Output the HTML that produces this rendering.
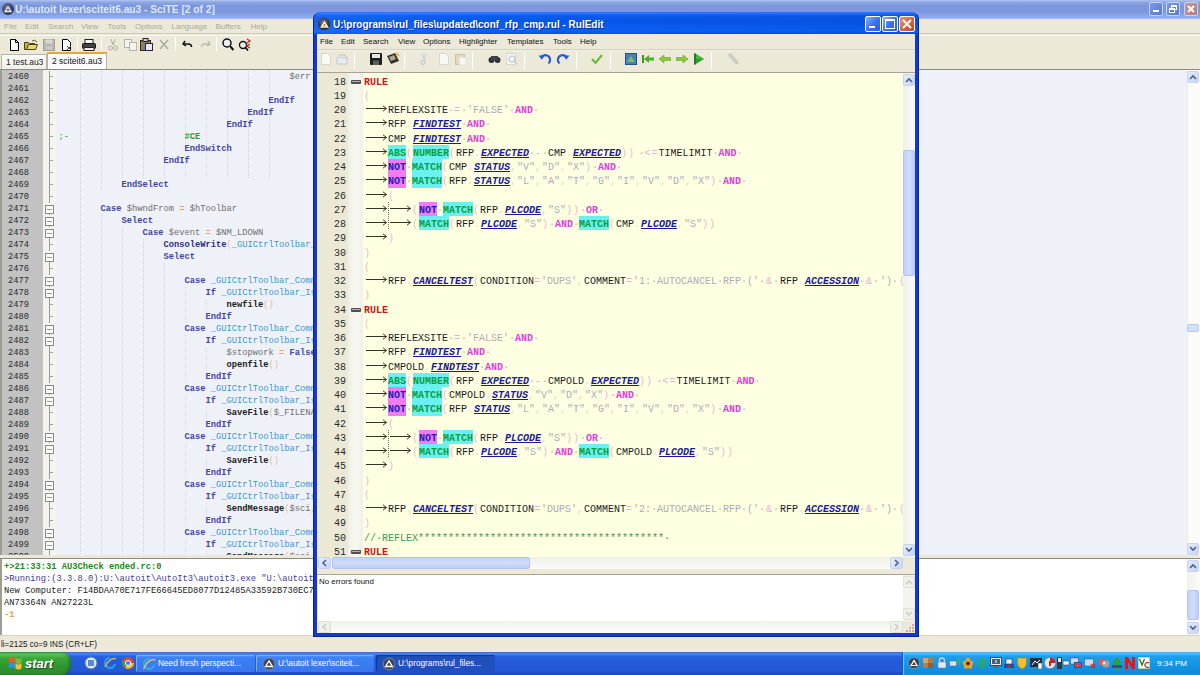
<!DOCTYPE html><html><head><meta charset="utf-8"><style>
*{margin:0;padding:0;box-sizing:border-box}
html,body{width:1200px;height:675px;overflow:hidden;background:#ece9d8;position:relative;font-family:"Liberation Sans",sans-serif}
.a{position:absolute}
.mono{font-family:"Liberation Mono",monospace;white-space:pre}
</style></head><body><div class="a" style="left:0;top:0;width:1200px;height:19px;background:linear-gradient(#b4c6f2 0px,#8ea8e6 2px,#7b95dc 6px,#7d98e0 12px,#8fabec 17px,#a8bdf0 19px)"></div><div class="a" style="left:2px;top:3px;width:12px;height:12px;border-radius:50%;background:radial-gradient(circle at 40% 35%,#6a7a9a,#2a3450 70%)"></div><svg class="a" style="left:3px;top:4px" width="10" height="10"><path d="M2 7.5 L5 3 L8 7.5 Z" fill="none" stroke="#e8ecf4" stroke-width="1.3"/></svg><div class="a" style="left:15px;top:2px;height:16px;line-height:16px;font-size:10.2px;font-weight:bold;color:#dfe8fb;white-space:nowrap;letter-spacing:0px">U:\autoit lexer\sciteit6.au3 - SciTE [2 of 2]</div><div class="a" style="left:1149px;top:2px;width:14px;height:14px;border:1px solid #c8d4f4;border-radius:2px;background:linear-gradient(135deg,#7d9ae4,#5878d8)"></div><div class="a" style="left:1153px;top:10px;width:6px;height:2px;background:#ffffff"></div><div class="a" style="left:1166px;top:2px;width:14px;height:14px;border:1px solid #c8d4f4;border-radius:2px;background:linear-gradient(135deg,#7d9ae4,#5878d8)"></div><div class="a" style="left:1171px;top:5px;width:6px;height:5px;border:1px solid #ffffff;border-top-width:2px"></div><div class="a" style="left:1169px;top:8px;width:6px;height:5px;border:1px solid #ffffff;border-top-width:2px;background:#5878d8"></div><div class="a" style="left:1184px;top:2px;width:14px;height:14px;border:1px solid #c8d4f4;border-radius:2px;background:linear-gradient(135deg,#c69a9a,#b57878)"></div><svg class="a" style="left:1184px;top:2px" width="14" height="14"><path d="M4 4 L10 10 M10 4 L4 10" stroke="#fff" stroke-width="1.8"/></svg><div class="a" style="left:0;top:19px;width:1200px;height:15px;background:#ece9d8;border-bottom:1px solid #cfcbbb"></div><div class="a" style="left:4px;top:20px;font-size:8px;line-height:13px;color:#aca899">File</div><div class="a" style="left:25px;top:20px;font-size:8px;line-height:13px;color:#aca899">Edit</div><div class="a" style="left:48px;top:20px;font-size:8px;line-height:13px;color:#aca899">Search</div><div class="a" style="left:81px;top:20px;font-size:8px;line-height:13px;color:#aca899">View</div><div class="a" style="left:107.5px;top:20px;font-size:8px;line-height:13px;color:#aca899">Tools</div><div class="a" style="left:135px;top:20px;font-size:8px;line-height:13px;color:#aca899">Options</div><div class="a" style="left:171.5px;top:20px;font-size:8px;line-height:13px;color:#aca899">Language</div><div class="a" style="left:215.5px;top:20px;font-size:8px;line-height:13px;color:#aca899">Buffers</div><div class="a" style="left:250.5px;top:20px;font-size:8px;line-height:13px;color:#aca899">Help</div><div class="a" style="left:0;top:35px;width:1200px;height:17px;background:#ece9d8;border-top:1px solid #f8f8f4"></div><svg class="a" style="left:9px;top:39px" width="11" height="12" viewBox="0 0 11 12"><path d="M1.5 0.5h5l3 3v8h-8z" fill="#fff" stroke="#000" stroke-width="1"/><path d="M6.5 0.5v3h3" fill="none" stroke="#000"/></svg><svg class="a" style="left:24px;top:39px" width="14" height="11" viewBox="0 0 14 11"><path d="M0.5 3.5h4l1 1h5v6h-10z" fill="#c8b040" stroke="#4a4010"/><path d="M2.5 10.5l2-5h9l-2 5z" fill="#e8d870" stroke="#4a4010"/><path d="M8 2 q3-2 5 1" stroke="#6a6020" fill="none"/></svg><svg class="a" style="left:43px;top:39px" width="12" height="12" viewBox="0 0 12 12"><rect x="0.5" y="0.5" width="11" height="11" fill="#b8b8b0" stroke="#a0a098"/><rect x="2.5" y="0.5" width="7" height="4" fill="#d8d8d0"/><rect x="3" y="7" width="6" height="4" fill="#c8c8c0"/></svg><svg class="a" style="left:61px;top:39px" width="12" height="12" viewBox="0 0 12 12"><path d="M1.5 0.5h5l3 3v8h-8z" fill="#fff" stroke="#000"/><path d="M6 7l4 4M10 7l-4 4" stroke="#444" stroke-width="1"/></svg><div class="a" style="left:77px;top:37px;width:1px;height:14px;background:#c8c4b4;border-right:1px solid #fff"></div><svg class="a" style="left:82px;top:39px" width="14" height="12" viewBox="0 0 14 12"><rect x="3" y="0.5" width="8" height="4" fill="#fff" stroke="#222"/><rect x="0.5" y="4.5" width="13" height="5" rx="1" fill="#444" stroke="#111"/><rect x="2" y="8.5" width="10" height="3" fill="#eee" stroke="#222"/></svg><div class="a" style="left:101px;top:37px;width:1px;height:14px;background:#c8c4b4;border-right:1px solid #fff"></div><svg class="a" style="left:108px;top:39px" width="10" height="12" viewBox="0 0 10 12"><path d="M3 0l2 6M7 0l-2 6" stroke="#b0b0a8" stroke-width="1"/><circle cx="2.5" cy="9" r="2" fill="none" stroke="#b0b0a8"/><circle cx="7.5" cy="9" r="2" fill="none" stroke="#b0b0a8"/></svg><svg class="a" style="left:124px;top:39px" width="13" height="12" viewBox="0 0 13 12"><rect x="0.5" y="0.5" width="7" height="8" fill="#f4f2ec" stroke="#b8b4a8"/><rect x="5.5" y="3.5" width="7" height="8" fill="#f4f2ec" stroke="#b8b4a8"/></svg><svg class="a" style="left:140px;top:38px" width="13" height="13" viewBox="0 0 13 13"><rect x="0.5" y="2.5" width="10" height="10" fill="#888068" stroke="#302810"/><rect x="3" y="0.5" width="5" height="3" fill="#ccc" stroke="#222"/><rect x="5.5" y="5.5" width="7" height="7" fill="#e8e8f8" stroke="#202060"/></svg><svg class="a" style="left:159px;top:39px" width="10" height="11" viewBox="0 0 10 11"><path d="M1 1l8 9M9 1l-8 9" stroke="#a8a8a0" stroke-width="1.3"/></svg><div class="a" style="left:175px;top:37px;width:1px;height:14px;background:#c8c4b4;border-right:1px solid #fff"></div><svg class="a" style="left:182px;top:40px" width="11" height="9" viewBox="0 0 11 9"><path d="M3 1l-2 3 3 2" fill="none" stroke="#101010" stroke-width="1.5"/><path d="M1.5 4h5q3 0 3 3" fill="none" stroke="#101010" stroke-width="1.5"/></svg><svg class="a" style="left:200px;top:40px" width="11" height="9" viewBox="0 0 11 9"><path d="M8 1l2 3-3 2" fill="none" stroke="#b8b8b0" stroke-width="1.3"/><path d="M9.5 4h-5q-3 0-3 3" fill="none" stroke="#b8b8b0" stroke-width="1.3"/></svg><div class="a" style="left:216px;top:37px;width:1px;height:14px;background:#c8c4b4;border-right:1px solid #fff"></div><svg class="a" style="left:222px;top:38px" width="12" height="13" viewBox="0 0 12 13"><circle cx="5" cy="5" r="4" fill="#e8f0f8" stroke="#101010" stroke-width="1.5"/><path d="M8 8l3.5 4" stroke="#101010" stroke-width="2"/></svg><svg class="a" style="left:238px;top:38px" width="14" height="13" viewBox="0 0 14 13"><circle cx="5" cy="7" r="3.5" fill="#f0f0f0" stroke="#101010" stroke-width="1.4"/><path d="M7.5 9.5l2.5 3" stroke="#101010" stroke-width="1.8"/><path d="M9 1l3 2-3 2M12 6l-3 2 3 2" fill="none" stroke="#c02020" stroke-width="1.2"/></svg><div class="a" style="left:0;top:52px;width:1200px;height:18px;background:#ece9d8"></div><div class="a" style="left:1px;top:54px;width:46px;height:15px;background:linear-gradient(#fdfdfb,#f0efe8);border:1px solid #b8b4a4;border-bottom:none;font-size:8.5px;line-height:14px;color:#222;padding-left:4px;white-space:nowrap">1 test.au3</div><div class="a" style="left:47px;top:52px;width:60px;height:17px;background:#fcfcfe;border:1px solid #b8b4a4;border-bottom:none;border-top:2px solid #e8a838;font-size:8.5px;line-height:14px;color:#111;padding-left:4px;white-space:nowrap">2 sciteit6.au3</div><div class="a" style="left:0;top:69px;width:1200px;height:1px;background:#8c8a80"></div><div class="a" style="left:0;top:70px;width:1200px;height:485px;background:#eef2f8"></div><div class="a" style="left:0;top:70px;width:2px;height:485px;background:#a09c90"></div><div class="a" style="left:2px;top:70px;width:41px;height:485px;background:#c2c2c2"></div><div class="a" style="left:43px;top:70px;width:13px;height:485px;background:#f5f3ee"></div><div class="a" style="left:1187px;top:70px;width:13px;height:485px;background:#fbfbf8;border-left:1px solid #eeede5"></div><div class="a" style="left:1187px;top:71px;width:12px;height:12px;border:1px solid #c6d4f6;border-radius:2px;background:linear-gradient(135deg,#e4ecfc,#c4d4f6)"></div><svg class="a" style="left:1188px;top:73px" width="10" height="8" viewBox="0 0 10 8"><path d="M2 6l3-3 3 3" fill="none" stroke="#4d6185" stroke-width="1.6"/></svg><div class="a" style="left:1187px;top:543px;width:12px;height:12px;border:1px solid #c6d4f6;border-radius:2px;background:linear-gradient(135deg,#e4ecfc,#c4d4f6)"></div><svg class="a" style="left:1188px;top:545px" width="10" height="8" viewBox="0 0 10 8"><path d="M2 2l3 3 3-3" fill="none" stroke="#4d6185" stroke-width="1.6"/></svg><div class="a" style="left:1187px;top:324px;width:12px;height:8px;border:1px solid #b8c8f0;border-radius:2px;background:#d4e0fa"></div><div class="a" style="left:0;top:0;width:1187px;height:555px;overflow:hidden"><div class="a" style="left:79.5px;top:71.0px;width:1px;height:12px;background:repeating-linear-gradient(#d0d4dc 0 1px,transparent 1px 2px)"></div><div class="a" style="left:100.5px;top:71.0px;width:1px;height:12px;background:repeating-linear-gradient(#d0d4dc 0 1px,transparent 1px 2px)"></div><div class="a" style="left:121.5px;top:71.0px;width:1px;height:12px;background:repeating-linear-gradient(#d0d4dc 0 1px,transparent 1px 2px)"></div><div class="a" style="left:142.5px;top:71.0px;width:1px;height:12px;background:repeating-linear-gradient(#d0d4dc 0 1px,transparent 1px 2px)"></div><div class="a" style="left:163.5px;top:71.0px;width:1px;height:12px;background:repeating-linear-gradient(#d0d4dc 0 1px,transparent 1px 2px)"></div><div class="a" style="left:184.5px;top:71.0px;width:1px;height:12px;background:repeating-linear-gradient(#d0d4dc 0 1px,transparent 1px 2px)"></div><div class="a" style="left:205.5px;top:71.0px;width:1px;height:12px;background:repeating-linear-gradient(#d0d4dc 0 1px,transparent 1px 2px)"></div><div class="a" style="left:226.5px;top:71.0px;width:1px;height:12px;background:repeating-linear-gradient(#d0d4dc 0 1px,transparent 1px 2px)"></div><div class="a" style="left:247.5px;top:71.0px;width:1px;height:12px;background:repeating-linear-gradient(#d0d4dc 0 1px,transparent 1px 2px)"></div><div class="a" style="left:268.5px;top:71.0px;width:1px;height:12px;background:repeating-linear-gradient(#d0d4dc 0 1px,transparent 1px 2px)"></div><div class="a mono" style="left:2px;top:71.0px;width:27px;text-align:right;font-size:8.75px;line-height:12px;color:#2a2a2a">2460</div><div class="a" style="left:49px;top:71.0px;width:1px;height:12px;background:#9a9a9a"></div><div class="a" style="left:49px;top:76.0px;width:4px;height:1px;background:#a0a0a0"></div><div class="a mono" style="left:289.50px;top:71.0px;font-size:8.75px;line-height:12px"><span style="color:#6e6e6e">$err</span></div><div class="a" style="left:79.5px;top:83.0px;width:1px;height:12px;background:repeating-linear-gradient(#d0d4dc 0 1px,transparent 1px 2px)"></div><div class="a" style="left:100.5px;top:83.0px;width:1px;height:12px;background:repeating-linear-gradient(#d0d4dc 0 1px,transparent 1px 2px)"></div><div class="a" style="left:121.5px;top:83.0px;width:1px;height:12px;background:repeating-linear-gradient(#d0d4dc 0 1px,transparent 1px 2px)"></div><div class="a" style="left:142.5px;top:83.0px;width:1px;height:12px;background:repeating-linear-gradient(#d0d4dc 0 1px,transparent 1px 2px)"></div><div class="a" style="left:163.5px;top:83.0px;width:1px;height:12px;background:repeating-linear-gradient(#d0d4dc 0 1px,transparent 1px 2px)"></div><div class="a" style="left:184.5px;top:83.0px;width:1px;height:12px;background:repeating-linear-gradient(#d0d4dc 0 1px,transparent 1px 2px)"></div><div class="a" style="left:205.5px;top:83.0px;width:1px;height:12px;background:repeating-linear-gradient(#d0d4dc 0 1px,transparent 1px 2px)"></div><div class="a" style="left:226.5px;top:83.0px;width:1px;height:12px;background:repeating-linear-gradient(#d0d4dc 0 1px,transparent 1px 2px)"></div><div class="a" style="left:247.5px;top:83.0px;width:1px;height:12px;background:repeating-linear-gradient(#d0d4dc 0 1px,transparent 1px 2px)"></div><div class="a" style="left:268.5px;top:83.0px;width:1px;height:12px;background:repeating-linear-gradient(#d0d4dc 0 1px,transparent 1px 2px)"></div><div class="a mono" style="left:2px;top:83.0px;width:27px;text-align:right;font-size:8.75px;line-height:12px;color:#2a2a2a">2461</div><div class="a" style="left:49px;top:83.0px;width:1px;height:12px;background:#9a9a9a"></div><div class="a" style="left:49px;top:88.0px;width:4px;height:1px;background:#a0a0a0"></div><div class="a mono" style="left:58.50px;top:83.0px;font-size:8.75px;line-height:12px"></div><div class="a" style="left:79.5px;top:95.0px;width:1px;height:12px;background:repeating-linear-gradient(#d0d4dc 0 1px,transparent 1px 2px)"></div><div class="a" style="left:100.5px;top:95.0px;width:1px;height:12px;background:repeating-linear-gradient(#d0d4dc 0 1px,transparent 1px 2px)"></div><div class="a" style="left:121.5px;top:95.0px;width:1px;height:12px;background:repeating-linear-gradient(#d0d4dc 0 1px,transparent 1px 2px)"></div><div class="a" style="left:142.5px;top:95.0px;width:1px;height:12px;background:repeating-linear-gradient(#d0d4dc 0 1px,transparent 1px 2px)"></div><div class="a" style="left:163.5px;top:95.0px;width:1px;height:12px;background:repeating-linear-gradient(#d0d4dc 0 1px,transparent 1px 2px)"></div><div class="a" style="left:184.5px;top:95.0px;width:1px;height:12px;background:repeating-linear-gradient(#d0d4dc 0 1px,transparent 1px 2px)"></div><div class="a" style="left:205.5px;top:95.0px;width:1px;height:12px;background:repeating-linear-gradient(#d0d4dc 0 1px,transparent 1px 2px)"></div><div class="a" style="left:226.5px;top:95.0px;width:1px;height:12px;background:repeating-linear-gradient(#d0d4dc 0 1px,transparent 1px 2px)"></div><div class="a" style="left:247.5px;top:95.0px;width:1px;height:12px;background:repeating-linear-gradient(#d0d4dc 0 1px,transparent 1px 2px)"></div><div class="a" style="left:268.5px;top:95.0px;width:1px;height:12px;background:repeating-linear-gradient(#d0d4dc 0 1px,transparent 1px 2px)"></div><div class="a mono" style="left:2px;top:95.0px;width:27px;text-align:right;font-size:8.75px;line-height:12px;color:#2a2a2a">2462</div><div class="a" style="left:49px;top:95.0px;width:1px;height:12px;background:#9a9a9a"></div><div class="a" style="left:49px;top:100.0px;width:4px;height:1px;background:#a0a0a0"></div><div class="a mono" style="left:268.50px;top:95.0px;font-size:8.75px;line-height:12px"><span style="color:#4444a8;font-weight:bold">EndIf</span></div><div class="a" style="left:79.5px;top:107.0px;width:1px;height:12px;background:repeating-linear-gradient(#d0d4dc 0 1px,transparent 1px 2px)"></div><div class="a" style="left:100.5px;top:107.0px;width:1px;height:12px;background:repeating-linear-gradient(#d0d4dc 0 1px,transparent 1px 2px)"></div><div class="a" style="left:121.5px;top:107.0px;width:1px;height:12px;background:repeating-linear-gradient(#d0d4dc 0 1px,transparent 1px 2px)"></div><div class="a" style="left:142.5px;top:107.0px;width:1px;height:12px;background:repeating-linear-gradient(#d0d4dc 0 1px,transparent 1px 2px)"></div><div class="a" style="left:163.5px;top:107.0px;width:1px;height:12px;background:repeating-linear-gradient(#d0d4dc 0 1px,transparent 1px 2px)"></div><div class="a" style="left:184.5px;top:107.0px;width:1px;height:12px;background:repeating-linear-gradient(#d0d4dc 0 1px,transparent 1px 2px)"></div><div class="a" style="left:205.5px;top:107.0px;width:1px;height:12px;background:repeating-linear-gradient(#d0d4dc 0 1px,transparent 1px 2px)"></div><div class="a" style="left:226.5px;top:107.0px;width:1px;height:12px;background:repeating-linear-gradient(#d0d4dc 0 1px,transparent 1px 2px)"></div><div class="a" style="left:247.5px;top:107.0px;width:1px;height:12px;background:repeating-linear-gradient(#d0d4dc 0 1px,transparent 1px 2px)"></div><div class="a" style="left:268.5px;top:107.0px;width:1px;height:12px;background:repeating-linear-gradient(#d0d4dc 0 1px,transparent 1px 2px)"></div><div class="a mono" style="left:2px;top:107.0px;width:27px;text-align:right;font-size:8.75px;line-height:12px;color:#2a2a2a">2463</div><div class="a" style="left:49px;top:107.0px;width:1px;height:12px;background:#9a9a9a"></div><div class="a" style="left:49px;top:112.0px;width:4px;height:1px;background:#a0a0a0"></div><div class="a mono" style="left:247.50px;top:107.0px;font-size:8.75px;line-height:12px"><span style="color:#4444a8;font-weight:bold">EndIf</span></div><div class="a" style="left:79.5px;top:119.0px;width:1px;height:12px;background:repeating-linear-gradient(#d0d4dc 0 1px,transparent 1px 2px)"></div><div class="a" style="left:100.5px;top:119.0px;width:1px;height:12px;background:repeating-linear-gradient(#d0d4dc 0 1px,transparent 1px 2px)"></div><div class="a" style="left:121.5px;top:119.0px;width:1px;height:12px;background:repeating-linear-gradient(#d0d4dc 0 1px,transparent 1px 2px)"></div><div class="a" style="left:142.5px;top:119.0px;width:1px;height:12px;background:repeating-linear-gradient(#d0d4dc 0 1px,transparent 1px 2px)"></div><div class="a" style="left:163.5px;top:119.0px;width:1px;height:12px;background:repeating-linear-gradient(#d0d4dc 0 1px,transparent 1px 2px)"></div><div class="a" style="left:184.5px;top:119.0px;width:1px;height:12px;background:repeating-linear-gradient(#d0d4dc 0 1px,transparent 1px 2px)"></div><div class="a" style="left:205.5px;top:119.0px;width:1px;height:12px;background:repeating-linear-gradient(#d0d4dc 0 1px,transparent 1px 2px)"></div><div class="a" style="left:226.5px;top:119.0px;width:1px;height:12px;background:repeating-linear-gradient(#d0d4dc 0 1px,transparent 1px 2px)"></div><div class="a" style="left:247.5px;top:119.0px;width:1px;height:12px;background:repeating-linear-gradient(#d0d4dc 0 1px,transparent 1px 2px)"></div><div class="a" style="left:268.5px;top:119.0px;width:1px;height:12px;background:repeating-linear-gradient(#d0d4dc 0 1px,transparent 1px 2px)"></div><div class="a mono" style="left:2px;top:119.0px;width:27px;text-align:right;font-size:8.75px;line-height:12px;color:#2a2a2a">2464</div><div class="a" style="left:49px;top:119.0px;width:1px;height:12px;background:#9a9a9a"></div><div class="a" style="left:49px;top:124.0px;width:4px;height:1px;background:#a0a0a0"></div><div class="a mono" style="left:226.50px;top:119.0px;font-size:8.75px;line-height:12px"><span style="color:#4444a8;font-weight:bold">EndIf</span></div><div class="a" style="left:79.5px;top:131.0px;width:1px;height:12px;background:repeating-linear-gradient(#d0d4dc 0 1px,transparent 1px 2px)"></div><div class="a" style="left:100.5px;top:131.0px;width:1px;height:12px;background:repeating-linear-gradient(#d0d4dc 0 1px,transparent 1px 2px)"></div><div class="a" style="left:121.5px;top:131.0px;width:1px;height:12px;background:repeating-linear-gradient(#d0d4dc 0 1px,transparent 1px 2px)"></div><div class="a" style="left:142.5px;top:131.0px;width:1px;height:12px;background:repeating-linear-gradient(#d0d4dc 0 1px,transparent 1px 2px)"></div><div class="a" style="left:163.5px;top:131.0px;width:1px;height:12px;background:repeating-linear-gradient(#d0d4dc 0 1px,transparent 1px 2px)"></div><div class="a" style="left:184.5px;top:131.0px;width:1px;height:12px;background:repeating-linear-gradient(#d0d4dc 0 1px,transparent 1px 2px)"></div><div class="a" style="left:205.5px;top:131.0px;width:1px;height:12px;background:repeating-linear-gradient(#d0d4dc 0 1px,transparent 1px 2px)"></div><div class="a" style="left:226.5px;top:131.0px;width:1px;height:12px;background:repeating-linear-gradient(#d0d4dc 0 1px,transparent 1px 2px)"></div><div class="a" style="left:247.5px;top:131.0px;width:1px;height:12px;background:repeating-linear-gradient(#d0d4dc 0 1px,transparent 1px 2px)"></div><div class="a" style="left:268.5px;top:131.0px;width:1px;height:12px;background:repeating-linear-gradient(#d0d4dc 0 1px,transparent 1px 2px)"></div><div class="a mono" style="left:2px;top:131.0px;width:27px;text-align:right;font-size:8.75px;line-height:12px;color:#2a2a2a">2465</div><div class="a" style="left:49px;top:131.0px;width:1px;height:12px;background:#9a9a9a"></div><div class="a" style="left:49px;top:136.0px;width:4px;height:1px;background:#a0a0a0"></div><div class="a mono" style="left:58.50px;top:131.0px;font-size:8.75px;line-height:12px"><span style="color:#2a9a2a">;-</span><span style="color:#222">                      </span><span style="color:#2a9a2a;font-weight:bold">#CE</span></div><div class="a" style="left:79.5px;top:143.0px;width:1px;height:12px;background:repeating-linear-gradient(#d0d4dc 0 1px,transparent 1px 2px)"></div><div class="a" style="left:100.5px;top:143.0px;width:1px;height:12px;background:repeating-linear-gradient(#d0d4dc 0 1px,transparent 1px 2px)"></div><div class="a" style="left:121.5px;top:143.0px;width:1px;height:12px;background:repeating-linear-gradient(#d0d4dc 0 1px,transparent 1px 2px)"></div><div class="a" style="left:142.5px;top:143.0px;width:1px;height:12px;background:repeating-linear-gradient(#d0d4dc 0 1px,transparent 1px 2px)"></div><div class="a" style="left:163.5px;top:143.0px;width:1px;height:12px;background:repeating-linear-gradient(#d0d4dc 0 1px,transparent 1px 2px)"></div><div class="a" style="left:184.5px;top:143.0px;width:1px;height:12px;background:repeating-linear-gradient(#d0d4dc 0 1px,transparent 1px 2px)"></div><div class="a" style="left:205.5px;top:143.0px;width:1px;height:12px;background:repeating-linear-gradient(#d0d4dc 0 1px,transparent 1px 2px)"></div><div class="a" style="left:226.5px;top:143.0px;width:1px;height:12px;background:repeating-linear-gradient(#d0d4dc 0 1px,transparent 1px 2px)"></div><div class="a" style="left:247.5px;top:143.0px;width:1px;height:12px;background:repeating-linear-gradient(#d0d4dc 0 1px,transparent 1px 2px)"></div><div class="a" style="left:268.5px;top:143.0px;width:1px;height:12px;background:repeating-linear-gradient(#d0d4dc 0 1px,transparent 1px 2px)"></div><div class="a mono" style="left:2px;top:143.0px;width:27px;text-align:right;font-size:8.75px;line-height:12px;color:#2a2a2a">2466</div><div class="a" style="left:49px;top:143.0px;width:1px;height:12px;background:#9a9a9a"></div><div class="a" style="left:49px;top:148.0px;width:4px;height:1px;background:#a0a0a0"></div><div class="a mono" style="left:184.50px;top:143.0px;font-size:8.75px;line-height:12px"><span style="color:#4444a8;font-weight:bold">EndSwitch</span></div><div class="a" style="left:79.5px;top:155.0px;width:1px;height:12px;background:repeating-linear-gradient(#d0d4dc 0 1px,transparent 1px 2px)"></div><div class="a" style="left:100.5px;top:155.0px;width:1px;height:12px;background:repeating-linear-gradient(#d0d4dc 0 1px,transparent 1px 2px)"></div><div class="a" style="left:121.5px;top:155.0px;width:1px;height:12px;background:repeating-linear-gradient(#d0d4dc 0 1px,transparent 1px 2px)"></div><div class="a" style="left:142.5px;top:155.0px;width:1px;height:12px;background:repeating-linear-gradient(#d0d4dc 0 1px,transparent 1px 2px)"></div><div class="a" style="left:163.5px;top:155.0px;width:1px;height:12px;background:repeating-linear-gradient(#d0d4dc 0 1px,transparent 1px 2px)"></div><div class="a" style="left:184.5px;top:155.0px;width:1px;height:12px;background:repeating-linear-gradient(#d0d4dc 0 1px,transparent 1px 2px)"></div><div class="a" style="left:205.5px;top:155.0px;width:1px;height:12px;background:repeating-linear-gradient(#d0d4dc 0 1px,transparent 1px 2px)"></div><div class="a" style="left:226.5px;top:155.0px;width:1px;height:12px;background:repeating-linear-gradient(#d0d4dc 0 1px,transparent 1px 2px)"></div><div class="a" style="left:247.5px;top:155.0px;width:1px;height:12px;background:repeating-linear-gradient(#d0d4dc 0 1px,transparent 1px 2px)"></div><div class="a" style="left:268.5px;top:155.0px;width:1px;height:12px;background:repeating-linear-gradient(#d0d4dc 0 1px,transparent 1px 2px)"></div><div class="a mono" style="left:2px;top:155.0px;width:27px;text-align:right;font-size:8.75px;line-height:12px;color:#2a2a2a">2467</div><div class="a" style="left:49px;top:155.0px;width:1px;height:12px;background:#9a9a9a"></div><div class="a" style="left:49px;top:160.0px;width:4px;height:1px;background:#a0a0a0"></div><div class="a mono" style="left:163.50px;top:155.0px;font-size:8.75px;line-height:12px"><span style="color:#4444a8;font-weight:bold">EndIf</span></div><div class="a" style="left:79.5px;top:167.0px;width:1px;height:12px;background:repeating-linear-gradient(#d0d4dc 0 1px,transparent 1px 2px)"></div><div class="a" style="left:100.5px;top:167.0px;width:1px;height:12px;background:repeating-linear-gradient(#d0d4dc 0 1px,transparent 1px 2px)"></div><div class="a" style="left:121.5px;top:167.0px;width:1px;height:12px;background:repeating-linear-gradient(#d0d4dc 0 1px,transparent 1px 2px)"></div><div class="a" style="left:142.5px;top:167.0px;width:1px;height:12px;background:repeating-linear-gradient(#d0d4dc 0 1px,transparent 1px 2px)"></div><div class="a" style="left:163.5px;top:167.0px;width:1px;height:12px;background:repeating-linear-gradient(#d0d4dc 0 1px,transparent 1px 2px)"></div><div class="a" style="left:184.5px;top:167.0px;width:1px;height:12px;background:repeating-linear-gradient(#d0d4dc 0 1px,transparent 1px 2px)"></div><div class="a" style="left:205.5px;top:167.0px;width:1px;height:12px;background:repeating-linear-gradient(#d0d4dc 0 1px,transparent 1px 2px)"></div><div class="a" style="left:226.5px;top:167.0px;width:1px;height:12px;background:repeating-linear-gradient(#d0d4dc 0 1px,transparent 1px 2px)"></div><div class="a" style="left:247.5px;top:167.0px;width:1px;height:12px;background:repeating-linear-gradient(#d0d4dc 0 1px,transparent 1px 2px)"></div><div class="a" style="left:268.5px;top:167.0px;width:1px;height:12px;background:repeating-linear-gradient(#d0d4dc 0 1px,transparent 1px 2px)"></div><div class="a mono" style="left:2px;top:167.0px;width:27px;text-align:right;font-size:8.75px;line-height:12px;color:#2a2a2a">2468</div><div class="a" style="left:49px;top:167.0px;width:1px;height:12px;background:#9a9a9a"></div><div class="a" style="left:49px;top:172.0px;width:4px;height:1px;background:#a0a0a0"></div><div class="a mono" style="left:58.50px;top:167.0px;font-size:8.75px;line-height:12px"></div><div class="a" style="left:79.5px;top:179.0px;width:1px;height:12px;background:repeating-linear-gradient(#d0d4dc 0 1px,transparent 1px 2px)"></div><div class="a" style="left:100.5px;top:179.0px;width:1px;height:12px;background:repeating-linear-gradient(#d0d4dc 0 1px,transparent 1px 2px)"></div><div class="a mono" style="left:2px;top:179.0px;width:27px;text-align:right;font-size:8.75px;line-height:12px;color:#2a2a2a">2469</div><div class="a" style="left:49px;top:179.0px;width:1px;height:12px;background:#9a9a9a"></div><div class="a" style="left:49px;top:184.0px;width:4px;height:1px;background:#a0a0a0"></div><div class="a mono" style="left:121.50px;top:179.0px;font-size:8.75px;line-height:12px"><span style="color:#4444a8;font-weight:bold">EndSelect</span></div><div class="a" style="left:79.5px;top:191.0px;width:1px;height:12px;background:repeating-linear-gradient(#d0d4dc 0 1px,transparent 1px 2px)"></div><div class="a mono" style="left:2px;top:191.0px;width:27px;text-align:right;font-size:8.75px;line-height:12px;color:#2a2a2a">2470</div><div class="a" style="left:49px;top:191.0px;width:1px;height:12px;background:#9a9a9a"></div><div class="a" style="left:49px;top:196.0px;width:4px;height:1px;background:#a0a0a0"></div><div class="a mono" style="left:58.50px;top:191.0px;font-size:8.75px;line-height:12px"></div><div class="a" style="left:79.5px;top:203.0px;width:1px;height:12px;background:repeating-linear-gradient(#d0d4dc 0 1px,transparent 1px 2px)"></div><div class="a mono" style="left:2px;top:203.0px;width:27px;text-align:right;font-size:8.75px;line-height:12px;color:#2a2a2a">2471</div><div class="a" style="left:45px;top:205.0px;width:8.5px;height:8.5px;border:1px solid #8a8a8a;background:#fff"></div><div class="a" style="left:47px;top:208.8px;width:4.5px;height:1px;background:#999"></div><div class="a" style="left:49px;top:213.5px;width:1px;height:1.5px;background:#909090"></div><div class="a mono" style="left:100.50px;top:203.0px;font-size:8.75px;line-height:12px"><span style="color:#4444a8;font-weight:bold">Case</span><span style="color:#222"> </span><span style="color:#6e6e6e">$hwndFrom</span><span style="color:#222"> </span><span style="color:#e6a45a;font-weight:bold">=</span><span style="color:#222"> </span><span style="color:#6e6e6e">$hToolbar</span></div><div class="a" style="left:79.5px;top:215.0px;width:1px;height:12px;background:repeating-linear-gradient(#d0d4dc 0 1px,transparent 1px 2px)"></div><div class="a" style="left:100.5px;top:215.0px;width:1px;height:12px;background:repeating-linear-gradient(#d0d4dc 0 1px,transparent 1px 2px)"></div><div class="a mono" style="left:2px;top:215.0px;width:27px;text-align:right;font-size:8.75px;line-height:12px;color:#2a2a2a">2472</div><div class="a" style="left:45px;top:217.0px;width:8.5px;height:8.5px;border:1px solid #8a8a8a;background:#fff"></div><div class="a" style="left:47px;top:220.8px;width:4.5px;height:1px;background:#999"></div><div class="a" style="left:49px;top:225.5px;width:1px;height:1.5px;background:#909090"></div><div class="a mono" style="left:121.50px;top:215.0px;font-size:8.75px;line-height:12px"><span style="color:#4444a8;font-weight:bold">Select</span></div><div class="a" style="left:79.5px;top:227.0px;width:1px;height:12px;background:repeating-linear-gradient(#d0d4dc 0 1px,transparent 1px 2px)"></div><div class="a" style="left:100.5px;top:227.0px;width:1px;height:12px;background:repeating-linear-gradient(#d0d4dc 0 1px,transparent 1px 2px)"></div><div class="a" style="left:121.5px;top:227.0px;width:1px;height:12px;background:repeating-linear-gradient(#d0d4dc 0 1px,transparent 1px 2px)"></div><div class="a mono" style="left:2px;top:227.0px;width:27px;text-align:right;font-size:8.75px;line-height:12px;color:#2a2a2a">2473</div><div class="a" style="left:45px;top:229.0px;width:8.5px;height:8.5px;border:1px solid #8a8a8a;background:#fff"></div><div class="a" style="left:47px;top:232.8px;width:4.5px;height:1px;background:#999"></div><div class="a" style="left:49px;top:237.5px;width:1px;height:1.5px;background:#909090"></div><div class="a mono" style="left:142.50px;top:227.0px;font-size:8.75px;line-height:12px"><span style="color:#4444a8;font-weight:bold">Case</span><span style="color:#222"> </span><span style="color:#6e6e6e">$event</span><span style="color:#222"> </span><span style="color:#e6a45a;font-weight:bold">=</span><span style="color:#222"> </span><span style="color:#6e6e6e">$NM_LDOWN</span></div><div class="a" style="left:79.5px;top:239.0px;width:1px;height:12px;background:repeating-linear-gradient(#d0d4dc 0 1px,transparent 1px 2px)"></div><div class="a" style="left:100.5px;top:239.0px;width:1px;height:12px;background:repeating-linear-gradient(#d0d4dc 0 1px,transparent 1px 2px)"></div><div class="a" style="left:121.5px;top:239.0px;width:1px;height:12px;background:repeating-linear-gradient(#d0d4dc 0 1px,transparent 1px 2px)"></div><div class="a" style="left:142.5px;top:239.0px;width:1px;height:12px;background:repeating-linear-gradient(#d0d4dc 0 1px,transparent 1px 2px)"></div><div class="a mono" style="left:2px;top:239.0px;width:27px;text-align:right;font-size:8.75px;line-height:12px;color:#2a2a2a">2474</div><div class="a" style="left:49px;top:239.0px;width:1px;height:12px;background:#9a9a9a"></div><div class="a" style="left:49px;top:244.0px;width:4px;height:1px;background:#a0a0a0"></div><div class="a mono" style="left:163.50px;top:239.0px;font-size:8.75px;line-height:12px"><span style="color:#303080;font-weight:bold">ConsoleWrite</span><span style="color:#e6c090">(</span><span style="color:#3a98d0">_GUICtrlToolbar_IndexToCommand</span><span style="color:#e6c090">(</span><span style="color:#6e6e6e">$hToolbar</span></div><div class="a" style="left:79.5px;top:251.0px;width:1px;height:12px;background:repeating-linear-gradient(#d0d4dc 0 1px,transparent 1px 2px)"></div><div class="a" style="left:100.5px;top:251.0px;width:1px;height:12px;background:repeating-linear-gradient(#d0d4dc 0 1px,transparent 1px 2px)"></div><div class="a" style="left:121.5px;top:251.0px;width:1px;height:12px;background:repeating-linear-gradient(#d0d4dc 0 1px,transparent 1px 2px)"></div><div class="a" style="left:142.5px;top:251.0px;width:1px;height:12px;background:repeating-linear-gradient(#d0d4dc 0 1px,transparent 1px 2px)"></div><div class="a mono" style="left:2px;top:251.0px;width:27px;text-align:right;font-size:8.75px;line-height:12px;color:#2a2a2a">2475</div><div class="a" style="left:45px;top:253.0px;width:8.5px;height:8.5px;border:1px solid #8a8a8a;background:#fff"></div><div class="a" style="left:47px;top:256.8px;width:4.5px;height:1px;background:#999"></div><div class="a" style="left:49px;top:261.5px;width:1px;height:1.5px;background:#909090"></div><div class="a mono" style="left:163.50px;top:251.0px;font-size:8.75px;line-height:12px"><span style="color:#4444a8;font-weight:bold">Select</span></div><div class="a" style="left:79.5px;top:263.0px;width:1px;height:12px;background:repeating-linear-gradient(#d0d4dc 0 1px,transparent 1px 2px)"></div><div class="a" style="left:100.5px;top:263.0px;width:1px;height:12px;background:repeating-linear-gradient(#d0d4dc 0 1px,transparent 1px 2px)"></div><div class="a" style="left:121.5px;top:263.0px;width:1px;height:12px;background:repeating-linear-gradient(#d0d4dc 0 1px,transparent 1px 2px)"></div><div class="a" style="left:142.5px;top:263.0px;width:1px;height:12px;background:repeating-linear-gradient(#d0d4dc 0 1px,transparent 1px 2px)"></div><div class="a" style="left:163.5px;top:263.0px;width:1px;height:12px;background:repeating-linear-gradient(#d0d4dc 0 1px,transparent 1px 2px)"></div><div class="a mono" style="left:2px;top:263.0px;width:27px;text-align:right;font-size:8.75px;line-height:12px;color:#2a2a2a">2476</div><div class="a" style="left:49px;top:263.0px;width:1px;height:12px;background:#9a9a9a"></div><div class="a" style="left:49px;top:268.0px;width:4px;height:1px;background:#a0a0a0"></div><div class="a mono" style="left:58.50px;top:263.0px;font-size:8.75px;line-height:12px"></div><div class="a" style="left:79.5px;top:275.0px;width:1px;height:12px;background:repeating-linear-gradient(#d0d4dc 0 1px,transparent 1px 2px)"></div><div class="a" style="left:100.5px;top:275.0px;width:1px;height:12px;background:repeating-linear-gradient(#d0d4dc 0 1px,transparent 1px 2px)"></div><div class="a" style="left:121.5px;top:275.0px;width:1px;height:12px;background:repeating-linear-gradient(#d0d4dc 0 1px,transparent 1px 2px)"></div><div class="a" style="left:142.5px;top:275.0px;width:1px;height:12px;background:repeating-linear-gradient(#d0d4dc 0 1px,transparent 1px 2px)"></div><div class="a" style="left:163.5px;top:275.0px;width:1px;height:12px;background:repeating-linear-gradient(#d0d4dc 0 1px,transparent 1px 2px)"></div><div class="a mono" style="left:2px;top:275.0px;width:27px;text-align:right;font-size:8.75px;line-height:12px;color:#2a2a2a">2477</div><div class="a" style="left:45px;top:277.0px;width:8.5px;height:8.5px;border:1px solid #8a8a8a;background:#fff"></div><div class="a" style="left:47px;top:280.8px;width:4.5px;height:1px;background:#999"></div><div class="a" style="left:49px;top:285.5px;width:1px;height:1.5px;background:#909090"></div><div class="a mono" style="left:184.50px;top:275.0px;font-size:8.75px;line-height:12px"><span style="color:#4444a8;font-weight:bold">Case</span><span style="color:#222"> </span><span style="color:#3a98d0">_GUICtrlToolbar_CommandToIndex</span><span style="color:#e6c090">(</span><span style="color:#6e6e6e">$hToolbar</span></div><div class="a" style="left:79.5px;top:287.0px;width:1px;height:12px;background:repeating-linear-gradient(#d0d4dc 0 1px,transparent 1px 2px)"></div><div class="a" style="left:100.5px;top:287.0px;width:1px;height:12px;background:repeating-linear-gradient(#d0d4dc 0 1px,transparent 1px 2px)"></div><div class="a" style="left:121.5px;top:287.0px;width:1px;height:12px;background:repeating-linear-gradient(#d0d4dc 0 1px,transparent 1px 2px)"></div><div class="a" style="left:142.5px;top:287.0px;width:1px;height:12px;background:repeating-linear-gradient(#d0d4dc 0 1px,transparent 1px 2px)"></div><div class="a" style="left:163.5px;top:287.0px;width:1px;height:12px;background:repeating-linear-gradient(#d0d4dc 0 1px,transparent 1px 2px)"></div><div class="a" style="left:184.5px;top:287.0px;width:1px;height:12px;background:repeating-linear-gradient(#d0d4dc 0 1px,transparent 1px 2px)"></div><div class="a mono" style="left:2px;top:287.0px;width:27px;text-align:right;font-size:8.75px;line-height:12px;color:#2a2a2a">2478</div><div class="a" style="left:45px;top:289.0px;width:8.5px;height:8.5px;border:1px solid #8a8a8a;background:#fff"></div><div class="a" style="left:47px;top:292.8px;width:4.5px;height:1px;background:#999"></div><div class="a" style="left:49px;top:297.5px;width:1px;height:1.5px;background:#909090"></div><div class="a mono" style="left:205.50px;top:287.0px;font-size:8.75px;line-height:12px"><span style="color:#4444a8;font-weight:bold">If</span><span style="color:#222"> </span><span style="color:#3a98d0">_GUICtrlToolbar_IsButtonChecked</span><span style="color:#e6c090">(</span></div><div class="a" style="left:79.5px;top:299.0px;width:1px;height:12px;background:repeating-linear-gradient(#d0d4dc 0 1px,transparent 1px 2px)"></div><div class="a" style="left:100.5px;top:299.0px;width:1px;height:12px;background:repeating-linear-gradient(#d0d4dc 0 1px,transparent 1px 2px)"></div><div class="a" style="left:121.5px;top:299.0px;width:1px;height:12px;background:repeating-linear-gradient(#d0d4dc 0 1px,transparent 1px 2px)"></div><div class="a" style="left:142.5px;top:299.0px;width:1px;height:12px;background:repeating-linear-gradient(#d0d4dc 0 1px,transparent 1px 2px)"></div><div class="a" style="left:163.5px;top:299.0px;width:1px;height:12px;background:repeating-linear-gradient(#d0d4dc 0 1px,transparent 1px 2px)"></div><div class="a" style="left:184.5px;top:299.0px;width:1px;height:12px;background:repeating-linear-gradient(#d0d4dc 0 1px,transparent 1px 2px)"></div><div class="a" style="left:205.5px;top:299.0px;width:1px;height:12px;background:repeating-linear-gradient(#d0d4dc 0 1px,transparent 1px 2px)"></div><div class="a mono" style="left:2px;top:299.0px;width:27px;text-align:right;font-size:8.75px;line-height:12px;color:#2a2a2a">2479</div><div class="a" style="left:49px;top:299.0px;width:1px;height:12px;background:#9a9a9a"></div><div class="a" style="left:49px;top:304.0px;width:4px;height:1px;background:#a0a0a0"></div><div class="a mono" style="left:226.50px;top:299.0px;font-size:8.75px;line-height:12px"><span style="color:#222;font-weight:bold">newfile</span><span style="color:#e6c090">()</span></div><div class="a" style="left:79.5px;top:311.0px;width:1px;height:12px;background:repeating-linear-gradient(#d0d4dc 0 1px,transparent 1px 2px)"></div><div class="a" style="left:100.5px;top:311.0px;width:1px;height:12px;background:repeating-linear-gradient(#d0d4dc 0 1px,transparent 1px 2px)"></div><div class="a" style="left:121.5px;top:311.0px;width:1px;height:12px;background:repeating-linear-gradient(#d0d4dc 0 1px,transparent 1px 2px)"></div><div class="a" style="left:142.5px;top:311.0px;width:1px;height:12px;background:repeating-linear-gradient(#d0d4dc 0 1px,transparent 1px 2px)"></div><div class="a" style="left:163.5px;top:311.0px;width:1px;height:12px;background:repeating-linear-gradient(#d0d4dc 0 1px,transparent 1px 2px)"></div><div class="a" style="left:184.5px;top:311.0px;width:1px;height:12px;background:repeating-linear-gradient(#d0d4dc 0 1px,transparent 1px 2px)"></div><div class="a mono" style="left:2px;top:311.0px;width:27px;text-align:right;font-size:8.75px;line-height:12px;color:#2a2a2a">2480</div><div class="a" style="left:49px;top:311.0px;width:1px;height:12px;background:#9a9a9a"></div><div class="a" style="left:49px;top:316.0px;width:4px;height:1px;background:#a0a0a0"></div><div class="a mono" style="left:205.50px;top:311.0px;font-size:8.75px;line-height:12px"><span style="color:#4444a8;font-weight:bold">EndIf</span></div><div class="a" style="left:79.5px;top:323.0px;width:1px;height:12px;background:repeating-linear-gradient(#d0d4dc 0 1px,transparent 1px 2px)"></div><div class="a" style="left:100.5px;top:323.0px;width:1px;height:12px;background:repeating-linear-gradient(#d0d4dc 0 1px,transparent 1px 2px)"></div><div class="a" style="left:121.5px;top:323.0px;width:1px;height:12px;background:repeating-linear-gradient(#d0d4dc 0 1px,transparent 1px 2px)"></div><div class="a" style="left:142.5px;top:323.0px;width:1px;height:12px;background:repeating-linear-gradient(#d0d4dc 0 1px,transparent 1px 2px)"></div><div class="a" style="left:163.5px;top:323.0px;width:1px;height:12px;background:repeating-linear-gradient(#d0d4dc 0 1px,transparent 1px 2px)"></div><div class="a mono" style="left:2px;top:323.0px;width:27px;text-align:right;font-size:8.75px;line-height:12px;color:#2a2a2a">2481</div><div class="a" style="left:45px;top:325.0px;width:8.5px;height:8.5px;border:1px solid #8a8a8a;background:#fff"></div><div class="a" style="left:47px;top:328.8px;width:4.5px;height:1px;background:#999"></div><div class="a" style="left:49px;top:333.5px;width:1px;height:1.5px;background:#909090"></div><div class="a mono" style="left:184.50px;top:323.0px;font-size:8.75px;line-height:12px"><span style="color:#4444a8;font-weight:bold">Case</span><span style="color:#222"> </span><span style="color:#3a98d0">_GUICtrlToolbar_CommandToIndex</span><span style="color:#e6c090">(</span></div><div class="a" style="left:79.5px;top:335.0px;width:1px;height:12px;background:repeating-linear-gradient(#d0d4dc 0 1px,transparent 1px 2px)"></div><div class="a" style="left:100.5px;top:335.0px;width:1px;height:12px;background:repeating-linear-gradient(#d0d4dc 0 1px,transparent 1px 2px)"></div><div class="a" style="left:121.5px;top:335.0px;width:1px;height:12px;background:repeating-linear-gradient(#d0d4dc 0 1px,transparent 1px 2px)"></div><div class="a" style="left:142.5px;top:335.0px;width:1px;height:12px;background:repeating-linear-gradient(#d0d4dc 0 1px,transparent 1px 2px)"></div><div class="a" style="left:163.5px;top:335.0px;width:1px;height:12px;background:repeating-linear-gradient(#d0d4dc 0 1px,transparent 1px 2px)"></div><div class="a" style="left:184.5px;top:335.0px;width:1px;height:12px;background:repeating-linear-gradient(#d0d4dc 0 1px,transparent 1px 2px)"></div><div class="a mono" style="left:2px;top:335.0px;width:27px;text-align:right;font-size:8.75px;line-height:12px;color:#2a2a2a">2482</div><div class="a" style="left:45px;top:337.0px;width:8.5px;height:8.5px;border:1px solid #8a8a8a;background:#fff"></div><div class="a" style="left:47px;top:340.8px;width:4.5px;height:1px;background:#999"></div><div class="a" style="left:49px;top:345.5px;width:1px;height:1.5px;background:#909090"></div><div class="a mono" style="left:205.50px;top:335.0px;font-size:8.75px;line-height:12px"><span style="color:#4444a8;font-weight:bold">If</span><span style="color:#222"> </span><span style="color:#3a98d0">_GUICtrlToolbar_IsButtonChecked</span><span style="color:#e6c090">(</span></div><div class="a" style="left:79.5px;top:347.0px;width:1px;height:12px;background:repeating-linear-gradient(#d0d4dc 0 1px,transparent 1px 2px)"></div><div class="a" style="left:100.5px;top:347.0px;width:1px;height:12px;background:repeating-linear-gradient(#d0d4dc 0 1px,transparent 1px 2px)"></div><div class="a" style="left:121.5px;top:347.0px;width:1px;height:12px;background:repeating-linear-gradient(#d0d4dc 0 1px,transparent 1px 2px)"></div><div class="a" style="left:142.5px;top:347.0px;width:1px;height:12px;background:repeating-linear-gradient(#d0d4dc 0 1px,transparent 1px 2px)"></div><div class="a" style="left:163.5px;top:347.0px;width:1px;height:12px;background:repeating-linear-gradient(#d0d4dc 0 1px,transparent 1px 2px)"></div><div class="a" style="left:184.5px;top:347.0px;width:1px;height:12px;background:repeating-linear-gradient(#d0d4dc 0 1px,transparent 1px 2px)"></div><div class="a" style="left:205.5px;top:347.0px;width:1px;height:12px;background:repeating-linear-gradient(#d0d4dc 0 1px,transparent 1px 2px)"></div><div class="a mono" style="left:2px;top:347.0px;width:27px;text-align:right;font-size:8.75px;line-height:12px;color:#2a2a2a">2483</div><div class="a" style="left:49px;top:347.0px;width:1px;height:12px;background:#9a9a9a"></div><div class="a" style="left:49px;top:352.0px;width:4px;height:1px;background:#a0a0a0"></div><div class="a mono" style="left:226.50px;top:347.0px;font-size:8.75px;line-height:12px"><span style="color:#6e6e6e">$stopwork</span><span style="color:#222"> </span><span style="color:#e6a45a;font-weight:bold">=</span><span style="color:#222"> </span><span style="color:#4444a8;font-weight:bold">False</span></div><div class="a" style="left:79.5px;top:359.0px;width:1px;height:12px;background:repeating-linear-gradient(#d0d4dc 0 1px,transparent 1px 2px)"></div><div class="a" style="left:100.5px;top:359.0px;width:1px;height:12px;background:repeating-linear-gradient(#d0d4dc 0 1px,transparent 1px 2px)"></div><div class="a" style="left:121.5px;top:359.0px;width:1px;height:12px;background:repeating-linear-gradient(#d0d4dc 0 1px,transparent 1px 2px)"></div><div class="a" style="left:142.5px;top:359.0px;width:1px;height:12px;background:repeating-linear-gradient(#d0d4dc 0 1px,transparent 1px 2px)"></div><div class="a" style="left:163.5px;top:359.0px;width:1px;height:12px;background:repeating-linear-gradient(#d0d4dc 0 1px,transparent 1px 2px)"></div><div class="a" style="left:184.5px;top:359.0px;width:1px;height:12px;background:repeating-linear-gradient(#d0d4dc 0 1px,transparent 1px 2px)"></div><div class="a" style="left:205.5px;top:359.0px;width:1px;height:12px;background:repeating-linear-gradient(#d0d4dc 0 1px,transparent 1px 2px)"></div><div class="a mono" style="left:2px;top:359.0px;width:27px;text-align:right;font-size:8.75px;line-height:12px;color:#2a2a2a">2484</div><div class="a" style="left:49px;top:359.0px;width:1px;height:12px;background:#9a9a9a"></div><div class="a" style="left:49px;top:364.0px;width:4px;height:1px;background:#a0a0a0"></div><div class="a mono" style="left:226.50px;top:359.0px;font-size:8.75px;line-height:12px"><span style="color:#222;font-weight:bold">openfile</span><span style="color:#e6c090">()</span></div><div class="a" style="left:79.5px;top:371.0px;width:1px;height:12px;background:repeating-linear-gradient(#d0d4dc 0 1px,transparent 1px 2px)"></div><div class="a" style="left:100.5px;top:371.0px;width:1px;height:12px;background:repeating-linear-gradient(#d0d4dc 0 1px,transparent 1px 2px)"></div><div class="a" style="left:121.5px;top:371.0px;width:1px;height:12px;background:repeating-linear-gradient(#d0d4dc 0 1px,transparent 1px 2px)"></div><div class="a" style="left:142.5px;top:371.0px;width:1px;height:12px;background:repeating-linear-gradient(#d0d4dc 0 1px,transparent 1px 2px)"></div><div class="a" style="left:163.5px;top:371.0px;width:1px;height:12px;background:repeating-linear-gradient(#d0d4dc 0 1px,transparent 1px 2px)"></div><div class="a" style="left:184.5px;top:371.0px;width:1px;height:12px;background:repeating-linear-gradient(#d0d4dc 0 1px,transparent 1px 2px)"></div><div class="a mono" style="left:2px;top:371.0px;width:27px;text-align:right;font-size:8.75px;line-height:12px;color:#2a2a2a">2485</div><div class="a" style="left:49px;top:371.0px;width:1px;height:12px;background:#9a9a9a"></div><div class="a" style="left:49px;top:376.0px;width:4px;height:1px;background:#a0a0a0"></div><div class="a mono" style="left:205.50px;top:371.0px;font-size:8.75px;line-height:12px"><span style="color:#4444a8;font-weight:bold">EndIf</span></div><div class="a" style="left:79.5px;top:383.0px;width:1px;height:12px;background:repeating-linear-gradient(#d0d4dc 0 1px,transparent 1px 2px)"></div><div class="a" style="left:100.5px;top:383.0px;width:1px;height:12px;background:repeating-linear-gradient(#d0d4dc 0 1px,transparent 1px 2px)"></div><div class="a" style="left:121.5px;top:383.0px;width:1px;height:12px;background:repeating-linear-gradient(#d0d4dc 0 1px,transparent 1px 2px)"></div><div class="a" style="left:142.5px;top:383.0px;width:1px;height:12px;background:repeating-linear-gradient(#d0d4dc 0 1px,transparent 1px 2px)"></div><div class="a" style="left:163.5px;top:383.0px;width:1px;height:12px;background:repeating-linear-gradient(#d0d4dc 0 1px,transparent 1px 2px)"></div><div class="a mono" style="left:2px;top:383.0px;width:27px;text-align:right;font-size:8.75px;line-height:12px;color:#2a2a2a">2486</div><div class="a" style="left:45px;top:385.0px;width:8.5px;height:8.5px;border:1px solid #8a8a8a;background:#fff"></div><div class="a" style="left:47px;top:388.8px;width:4.5px;height:1px;background:#999"></div><div class="a" style="left:49px;top:393.5px;width:1px;height:1.5px;background:#909090"></div><div class="a mono" style="left:184.50px;top:383.0px;font-size:8.75px;line-height:12px"><span style="color:#4444a8;font-weight:bold">Case</span><span style="color:#222"> </span><span style="color:#3a98d0">_GUICtrlToolbar_CommandToIndex</span><span style="color:#e6c090">(</span></div><div class="a" style="left:79.5px;top:395.0px;width:1px;height:12px;background:repeating-linear-gradient(#d0d4dc 0 1px,transparent 1px 2px)"></div><div class="a" style="left:100.5px;top:395.0px;width:1px;height:12px;background:repeating-linear-gradient(#d0d4dc 0 1px,transparent 1px 2px)"></div><div class="a" style="left:121.5px;top:395.0px;width:1px;height:12px;background:repeating-linear-gradient(#d0d4dc 0 1px,transparent 1px 2px)"></div><div class="a" style="left:142.5px;top:395.0px;width:1px;height:12px;background:repeating-linear-gradient(#d0d4dc 0 1px,transparent 1px 2px)"></div><div class="a" style="left:163.5px;top:395.0px;width:1px;height:12px;background:repeating-linear-gradient(#d0d4dc 0 1px,transparent 1px 2px)"></div><div class="a" style="left:184.5px;top:395.0px;width:1px;height:12px;background:repeating-linear-gradient(#d0d4dc 0 1px,transparent 1px 2px)"></div><div class="a mono" style="left:2px;top:395.0px;width:27px;text-align:right;font-size:8.75px;line-height:12px;color:#2a2a2a">2487</div><div class="a" style="left:45px;top:397.0px;width:8.5px;height:8.5px;border:1px solid #8a8a8a;background:#fff"></div><div class="a" style="left:47px;top:400.8px;width:4.5px;height:1px;background:#999"></div><div class="a" style="left:49px;top:405.5px;width:1px;height:1.5px;background:#909090"></div><div class="a mono" style="left:205.50px;top:395.0px;font-size:8.75px;line-height:12px"><span style="color:#4444a8;font-weight:bold">If</span><span style="color:#222"> </span><span style="color:#3a98d0">_GUICtrlToolbar_IsButtonChecked</span><span style="color:#e6c090">(</span></div><div class="a" style="left:79.5px;top:407.0px;width:1px;height:12px;background:repeating-linear-gradient(#d0d4dc 0 1px,transparent 1px 2px)"></div><div class="a" style="left:100.5px;top:407.0px;width:1px;height:12px;background:repeating-linear-gradient(#d0d4dc 0 1px,transparent 1px 2px)"></div><div class="a" style="left:121.5px;top:407.0px;width:1px;height:12px;background:repeating-linear-gradient(#d0d4dc 0 1px,transparent 1px 2px)"></div><div class="a" style="left:142.5px;top:407.0px;width:1px;height:12px;background:repeating-linear-gradient(#d0d4dc 0 1px,transparent 1px 2px)"></div><div class="a" style="left:163.5px;top:407.0px;width:1px;height:12px;background:repeating-linear-gradient(#d0d4dc 0 1px,transparent 1px 2px)"></div><div class="a" style="left:184.5px;top:407.0px;width:1px;height:12px;background:repeating-linear-gradient(#d0d4dc 0 1px,transparent 1px 2px)"></div><div class="a" style="left:205.5px;top:407.0px;width:1px;height:12px;background:repeating-linear-gradient(#d0d4dc 0 1px,transparent 1px 2px)"></div><div class="a mono" style="left:2px;top:407.0px;width:27px;text-align:right;font-size:8.75px;line-height:12px;color:#2a2a2a">2488</div><div class="a" style="left:49px;top:407.0px;width:1px;height:12px;background:#9a9a9a"></div><div class="a" style="left:49px;top:412.0px;width:4px;height:1px;background:#a0a0a0"></div><div class="a mono" style="left:226.50px;top:407.0px;font-size:8.75px;line-height:12px"><span style="color:#222;font-weight:bold">SaveFile</span><span style="color:#e6c090">(</span><span style="color:#6e6e6e">$_FILENAME</span><span style="color:#e6c090">)</span></div><div class="a" style="left:79.5px;top:419.0px;width:1px;height:12px;background:repeating-linear-gradient(#d0d4dc 0 1px,transparent 1px 2px)"></div><div class="a" style="left:100.5px;top:419.0px;width:1px;height:12px;background:repeating-linear-gradient(#d0d4dc 0 1px,transparent 1px 2px)"></div><div class="a" style="left:121.5px;top:419.0px;width:1px;height:12px;background:repeating-linear-gradient(#d0d4dc 0 1px,transparent 1px 2px)"></div><div class="a" style="left:142.5px;top:419.0px;width:1px;height:12px;background:repeating-linear-gradient(#d0d4dc 0 1px,transparent 1px 2px)"></div><div class="a" style="left:163.5px;top:419.0px;width:1px;height:12px;background:repeating-linear-gradient(#d0d4dc 0 1px,transparent 1px 2px)"></div><div class="a" style="left:184.5px;top:419.0px;width:1px;height:12px;background:repeating-linear-gradient(#d0d4dc 0 1px,transparent 1px 2px)"></div><div class="a mono" style="left:2px;top:419.0px;width:27px;text-align:right;font-size:8.75px;line-height:12px;color:#2a2a2a">2489</div><div class="a" style="left:49px;top:419.0px;width:1px;height:12px;background:#9a9a9a"></div><div class="a" style="left:49px;top:424.0px;width:4px;height:1px;background:#a0a0a0"></div><div class="a mono" style="left:205.50px;top:419.0px;font-size:8.75px;line-height:12px"><span style="color:#4444a8;font-weight:bold">EndIf</span></div><div class="a" style="left:79.5px;top:431.0px;width:1px;height:12px;background:repeating-linear-gradient(#d0d4dc 0 1px,transparent 1px 2px)"></div><div class="a" style="left:100.5px;top:431.0px;width:1px;height:12px;background:repeating-linear-gradient(#d0d4dc 0 1px,transparent 1px 2px)"></div><div class="a" style="left:121.5px;top:431.0px;width:1px;height:12px;background:repeating-linear-gradient(#d0d4dc 0 1px,transparent 1px 2px)"></div><div class="a" style="left:142.5px;top:431.0px;width:1px;height:12px;background:repeating-linear-gradient(#d0d4dc 0 1px,transparent 1px 2px)"></div><div class="a" style="left:163.5px;top:431.0px;width:1px;height:12px;background:repeating-linear-gradient(#d0d4dc 0 1px,transparent 1px 2px)"></div><div class="a mono" style="left:2px;top:431.0px;width:27px;text-align:right;font-size:8.75px;line-height:12px;color:#2a2a2a">2490</div><div class="a" style="left:45px;top:433.0px;width:8.5px;height:8.5px;border:1px solid #8a8a8a;background:#fff"></div><div class="a" style="left:47px;top:436.8px;width:4.5px;height:1px;background:#999"></div><div class="a" style="left:49px;top:441.5px;width:1px;height:1.5px;background:#909090"></div><div class="a mono" style="left:184.50px;top:431.0px;font-size:8.75px;line-height:12px"><span style="color:#4444a8;font-weight:bold">Case</span><span style="color:#222"> </span><span style="color:#3a98d0">_GUICtrlToolbar_CommandToIndex</span><span style="color:#e6c090">(</span></div><div class="a" style="left:79.5px;top:443.0px;width:1px;height:12px;background:repeating-linear-gradient(#d0d4dc 0 1px,transparent 1px 2px)"></div><div class="a" style="left:100.5px;top:443.0px;width:1px;height:12px;background:repeating-linear-gradient(#d0d4dc 0 1px,transparent 1px 2px)"></div><div class="a" style="left:121.5px;top:443.0px;width:1px;height:12px;background:repeating-linear-gradient(#d0d4dc 0 1px,transparent 1px 2px)"></div><div class="a" style="left:142.5px;top:443.0px;width:1px;height:12px;background:repeating-linear-gradient(#d0d4dc 0 1px,transparent 1px 2px)"></div><div class="a" style="left:163.5px;top:443.0px;width:1px;height:12px;background:repeating-linear-gradient(#d0d4dc 0 1px,transparent 1px 2px)"></div><div class="a" style="left:184.5px;top:443.0px;width:1px;height:12px;background:repeating-linear-gradient(#d0d4dc 0 1px,transparent 1px 2px)"></div><div class="a mono" style="left:2px;top:443.0px;width:27px;text-align:right;font-size:8.75px;line-height:12px;color:#2a2a2a">2491</div><div class="a" style="left:45px;top:445.0px;width:8.5px;height:8.5px;border:1px solid #8a8a8a;background:#fff"></div><div class="a" style="left:47px;top:448.8px;width:4.5px;height:1px;background:#999"></div><div class="a" style="left:49px;top:453.5px;width:1px;height:1.5px;background:#909090"></div><div class="a mono" style="left:205.50px;top:443.0px;font-size:8.75px;line-height:12px"><span style="color:#4444a8;font-weight:bold">If</span><span style="color:#222"> </span><span style="color:#3a98d0">_GUICtrlToolbar_IsButtonChecked</span><span style="color:#e6c090">(</span></div><div class="a" style="left:79.5px;top:455.0px;width:1px;height:12px;background:repeating-linear-gradient(#d0d4dc 0 1px,transparent 1px 2px)"></div><div class="a" style="left:100.5px;top:455.0px;width:1px;height:12px;background:repeating-linear-gradient(#d0d4dc 0 1px,transparent 1px 2px)"></div><div class="a" style="left:121.5px;top:455.0px;width:1px;height:12px;background:repeating-linear-gradient(#d0d4dc 0 1px,transparent 1px 2px)"></div><div class="a" style="left:142.5px;top:455.0px;width:1px;height:12px;background:repeating-linear-gradient(#d0d4dc 0 1px,transparent 1px 2px)"></div><div class="a" style="left:163.5px;top:455.0px;width:1px;height:12px;background:repeating-linear-gradient(#d0d4dc 0 1px,transparent 1px 2px)"></div><div class="a" style="left:184.5px;top:455.0px;width:1px;height:12px;background:repeating-linear-gradient(#d0d4dc 0 1px,transparent 1px 2px)"></div><div class="a" style="left:205.5px;top:455.0px;width:1px;height:12px;background:repeating-linear-gradient(#d0d4dc 0 1px,transparent 1px 2px)"></div><div class="a mono" style="left:2px;top:455.0px;width:27px;text-align:right;font-size:8.75px;line-height:12px;color:#2a2a2a">2492</div><div class="a" style="left:49px;top:455.0px;width:1px;height:12px;background:#9a9a9a"></div><div class="a" style="left:49px;top:460.0px;width:4px;height:1px;background:#a0a0a0"></div><div class="a mono" style="left:226.50px;top:455.0px;font-size:8.75px;line-height:12px"><span style="color:#222;font-weight:bold">SaveFile</span><span style="color:#e6c090">()</span></div><div class="a" style="left:79.5px;top:467.0px;width:1px;height:12px;background:repeating-linear-gradient(#d0d4dc 0 1px,transparent 1px 2px)"></div><div class="a" style="left:100.5px;top:467.0px;width:1px;height:12px;background:repeating-linear-gradient(#d0d4dc 0 1px,transparent 1px 2px)"></div><div class="a" style="left:121.5px;top:467.0px;width:1px;height:12px;background:repeating-linear-gradient(#d0d4dc 0 1px,transparent 1px 2px)"></div><div class="a" style="left:142.5px;top:467.0px;width:1px;height:12px;background:repeating-linear-gradient(#d0d4dc 0 1px,transparent 1px 2px)"></div><div class="a" style="left:163.5px;top:467.0px;width:1px;height:12px;background:repeating-linear-gradient(#d0d4dc 0 1px,transparent 1px 2px)"></div><div class="a" style="left:184.5px;top:467.0px;width:1px;height:12px;background:repeating-linear-gradient(#d0d4dc 0 1px,transparent 1px 2px)"></div><div class="a mono" style="left:2px;top:467.0px;width:27px;text-align:right;font-size:8.75px;line-height:12px;color:#2a2a2a">2493</div><div class="a" style="left:49px;top:467.0px;width:1px;height:12px;background:#9a9a9a"></div><div class="a" style="left:49px;top:472.0px;width:4px;height:1px;background:#a0a0a0"></div><div class="a mono" style="left:205.50px;top:467.0px;font-size:8.75px;line-height:12px"><span style="color:#4444a8;font-weight:bold">EndIf</span></div><div class="a" style="left:79.5px;top:479.0px;width:1px;height:12px;background:repeating-linear-gradient(#d0d4dc 0 1px,transparent 1px 2px)"></div><div class="a" style="left:100.5px;top:479.0px;width:1px;height:12px;background:repeating-linear-gradient(#d0d4dc 0 1px,transparent 1px 2px)"></div><div class="a" style="left:121.5px;top:479.0px;width:1px;height:12px;background:repeating-linear-gradient(#d0d4dc 0 1px,transparent 1px 2px)"></div><div class="a" style="left:142.5px;top:479.0px;width:1px;height:12px;background:repeating-linear-gradient(#d0d4dc 0 1px,transparent 1px 2px)"></div><div class="a" style="left:163.5px;top:479.0px;width:1px;height:12px;background:repeating-linear-gradient(#d0d4dc 0 1px,transparent 1px 2px)"></div><div class="a mono" style="left:2px;top:479.0px;width:27px;text-align:right;font-size:8.75px;line-height:12px;color:#2a2a2a">2494</div><div class="a" style="left:45px;top:481.0px;width:8.5px;height:8.5px;border:1px solid #8a8a8a;background:#fff"></div><div class="a" style="left:47px;top:484.8px;width:4.5px;height:1px;background:#999"></div><div class="a" style="left:49px;top:489.5px;width:1px;height:1.5px;background:#909090"></div><div class="a mono" style="left:184.50px;top:479.0px;font-size:8.75px;line-height:12px"><span style="color:#4444a8;font-weight:bold">Case</span><span style="color:#222"> </span><span style="color:#3a98d0">_GUICtrlToolbar_CommandToIndex</span><span style="color:#e6c090">(</span></div><div class="a" style="left:79.5px;top:491.0px;width:1px;height:12px;background:repeating-linear-gradient(#d0d4dc 0 1px,transparent 1px 2px)"></div><div class="a" style="left:100.5px;top:491.0px;width:1px;height:12px;background:repeating-linear-gradient(#d0d4dc 0 1px,transparent 1px 2px)"></div><div class="a" style="left:121.5px;top:491.0px;width:1px;height:12px;background:repeating-linear-gradient(#d0d4dc 0 1px,transparent 1px 2px)"></div><div class="a" style="left:142.5px;top:491.0px;width:1px;height:12px;background:repeating-linear-gradient(#d0d4dc 0 1px,transparent 1px 2px)"></div><div class="a" style="left:163.5px;top:491.0px;width:1px;height:12px;background:repeating-linear-gradient(#d0d4dc 0 1px,transparent 1px 2px)"></div><div class="a" style="left:184.5px;top:491.0px;width:1px;height:12px;background:repeating-linear-gradient(#d0d4dc 0 1px,transparent 1px 2px)"></div><div class="a mono" style="left:2px;top:491.0px;width:27px;text-align:right;font-size:8.75px;line-height:12px;color:#2a2a2a">2495</div><div class="a" style="left:45px;top:493.0px;width:8.5px;height:8.5px;border:1px solid #8a8a8a;background:#fff"></div><div class="a" style="left:47px;top:496.8px;width:4.5px;height:1px;background:#999"></div><div class="a" style="left:49px;top:501.5px;width:1px;height:1.5px;background:#909090"></div><div class="a mono" style="left:205.50px;top:491.0px;font-size:8.75px;line-height:12px"><span style="color:#4444a8;font-weight:bold">If</span><span style="color:#222"> </span><span style="color:#3a98d0">_GUICtrlToolbar_IsButtonChecked</span><span style="color:#e6c090">(</span></div><div class="a" style="left:79.5px;top:503.0px;width:1px;height:12px;background:repeating-linear-gradient(#d0d4dc 0 1px,transparent 1px 2px)"></div><div class="a" style="left:100.5px;top:503.0px;width:1px;height:12px;background:repeating-linear-gradient(#d0d4dc 0 1px,transparent 1px 2px)"></div><div class="a" style="left:121.5px;top:503.0px;width:1px;height:12px;background:repeating-linear-gradient(#d0d4dc 0 1px,transparent 1px 2px)"></div><div class="a" style="left:142.5px;top:503.0px;width:1px;height:12px;background:repeating-linear-gradient(#d0d4dc 0 1px,transparent 1px 2px)"></div><div class="a" style="left:163.5px;top:503.0px;width:1px;height:12px;background:repeating-linear-gradient(#d0d4dc 0 1px,transparent 1px 2px)"></div><div class="a" style="left:184.5px;top:503.0px;width:1px;height:12px;background:repeating-linear-gradient(#d0d4dc 0 1px,transparent 1px 2px)"></div><div class="a" style="left:205.5px;top:503.0px;width:1px;height:12px;background:repeating-linear-gradient(#d0d4dc 0 1px,transparent 1px 2px)"></div><div class="a mono" style="left:2px;top:503.0px;width:27px;text-align:right;font-size:8.75px;line-height:12px;color:#2a2a2a">2496</div><div class="a" style="left:49px;top:503.0px;width:1px;height:12px;background:#9a9a9a"></div><div class="a" style="left:49px;top:508.0px;width:4px;height:1px;background:#a0a0a0"></div><div class="a mono" style="left:226.50px;top:503.0px;font-size:8.75px;line-height:12px"><span style="color:#222;font-weight:bold">SendMessage</span><span style="color:#e6c090">(</span><span style="color:#6e6e6e">$sci</span><span style="color:#e6c090">,</span><span style="color:#222"> </span><span style="color:#6e6e6e">$SCI_UNDO</span></div><div class="a" style="left:79.5px;top:515.0px;width:1px;height:12px;background:repeating-linear-gradient(#d0d4dc 0 1px,transparent 1px 2px)"></div><div class="a" style="left:100.5px;top:515.0px;width:1px;height:12px;background:repeating-linear-gradient(#d0d4dc 0 1px,transparent 1px 2px)"></div><div class="a" style="left:121.5px;top:515.0px;width:1px;height:12px;background:repeating-linear-gradient(#d0d4dc 0 1px,transparent 1px 2px)"></div><div class="a" style="left:142.5px;top:515.0px;width:1px;height:12px;background:repeating-linear-gradient(#d0d4dc 0 1px,transparent 1px 2px)"></div><div class="a" style="left:163.5px;top:515.0px;width:1px;height:12px;background:repeating-linear-gradient(#d0d4dc 0 1px,transparent 1px 2px)"></div><div class="a" style="left:184.5px;top:515.0px;width:1px;height:12px;background:repeating-linear-gradient(#d0d4dc 0 1px,transparent 1px 2px)"></div><div class="a mono" style="left:2px;top:515.0px;width:27px;text-align:right;font-size:8.75px;line-height:12px;color:#2a2a2a">2497</div><div class="a" style="left:49px;top:515.0px;width:1px;height:12px;background:#9a9a9a"></div><div class="a" style="left:49px;top:520.0px;width:4px;height:1px;background:#a0a0a0"></div><div class="a mono" style="left:205.50px;top:515.0px;font-size:8.75px;line-height:12px"><span style="color:#4444a8;font-weight:bold">EndIf</span></div><div class="a" style="left:79.5px;top:527.0px;width:1px;height:12px;background:repeating-linear-gradient(#d0d4dc 0 1px,transparent 1px 2px)"></div><div class="a" style="left:100.5px;top:527.0px;width:1px;height:12px;background:repeating-linear-gradient(#d0d4dc 0 1px,transparent 1px 2px)"></div><div class="a" style="left:121.5px;top:527.0px;width:1px;height:12px;background:repeating-linear-gradient(#d0d4dc 0 1px,transparent 1px 2px)"></div><div class="a" style="left:142.5px;top:527.0px;width:1px;height:12px;background:repeating-linear-gradient(#d0d4dc 0 1px,transparent 1px 2px)"></div><div class="a" style="left:163.5px;top:527.0px;width:1px;height:12px;background:repeating-linear-gradient(#d0d4dc 0 1px,transparent 1px 2px)"></div><div class="a mono" style="left:2px;top:527.0px;width:27px;text-align:right;font-size:8.75px;line-height:12px;color:#2a2a2a">2498</div><div class="a" style="left:45px;top:529.0px;width:8.5px;height:8.5px;border:1px solid #8a8a8a;background:#fff"></div><div class="a" style="left:47px;top:532.8px;width:4.5px;height:1px;background:#999"></div><div class="a" style="left:49px;top:537.5px;width:1px;height:1.5px;background:#909090"></div><div class="a mono" style="left:184.50px;top:527.0px;font-size:8.75px;line-height:12px"><span style="color:#4444a8;font-weight:bold">Case</span><span style="color:#222"> </span><span style="color:#3a98d0">_GUICtrlToolbar_CommandToIndex</span><span style="color:#e6c090">(</span></div><div class="a" style="left:79.5px;top:539.0px;width:1px;height:12px;background:repeating-linear-gradient(#d0d4dc 0 1px,transparent 1px 2px)"></div><div class="a" style="left:100.5px;top:539.0px;width:1px;height:12px;background:repeating-linear-gradient(#d0d4dc 0 1px,transparent 1px 2px)"></div><div class="a" style="left:121.5px;top:539.0px;width:1px;height:12px;background:repeating-linear-gradient(#d0d4dc 0 1px,transparent 1px 2px)"></div><div class="a" style="left:142.5px;top:539.0px;width:1px;height:12px;background:repeating-linear-gradient(#d0d4dc 0 1px,transparent 1px 2px)"></div><div class="a" style="left:163.5px;top:539.0px;width:1px;height:12px;background:repeating-linear-gradient(#d0d4dc 0 1px,transparent 1px 2px)"></div><div class="a" style="left:184.5px;top:539.0px;width:1px;height:12px;background:repeating-linear-gradient(#d0d4dc 0 1px,transparent 1px 2px)"></div><div class="a mono" style="left:2px;top:539.0px;width:27px;text-align:right;font-size:8.75px;line-height:12px;color:#2a2a2a">2499</div><div class="a" style="left:45px;top:541.0px;width:8.5px;height:8.5px;border:1px solid #8a8a8a;background:#fff"></div><div class="a" style="left:47px;top:544.8px;width:4.5px;height:1px;background:#999"></div><div class="a" style="left:49px;top:549.5px;width:1px;height:1.5px;background:#909090"></div><div class="a mono" style="left:205.50px;top:539.0px;font-size:8.75px;line-height:12px"><span style="color:#4444a8;font-weight:bold">If</span><span style="color:#222"> </span><span style="color:#3a98d0">_GUICtrlToolbar_IsButtonChecked</span><span style="color:#e6c090">(</span></div><div class="a" style="left:79.5px;top:551.0px;width:1px;height:12px;background:repeating-linear-gradient(#d0d4dc 0 1px,transparent 1px 2px)"></div><div class="a" style="left:100.5px;top:551.0px;width:1px;height:12px;background:repeating-linear-gradient(#d0d4dc 0 1px,transparent 1px 2px)"></div><div class="a" style="left:121.5px;top:551.0px;width:1px;height:12px;background:repeating-linear-gradient(#d0d4dc 0 1px,transparent 1px 2px)"></div><div class="a" style="left:142.5px;top:551.0px;width:1px;height:12px;background:repeating-linear-gradient(#d0d4dc 0 1px,transparent 1px 2px)"></div><div class="a" style="left:163.5px;top:551.0px;width:1px;height:12px;background:repeating-linear-gradient(#d0d4dc 0 1px,transparent 1px 2px)"></div><div class="a" style="left:184.5px;top:551.0px;width:1px;height:12px;background:repeating-linear-gradient(#d0d4dc 0 1px,transparent 1px 2px)"></div><div class="a" style="left:205.5px;top:551.0px;width:1px;height:12px;background:repeating-linear-gradient(#d0d4dc 0 1px,transparent 1px 2px)"></div><div class="a mono" style="left:2px;top:551.0px;width:27px;text-align:right;font-size:8.75px;line-height:12px;color:#2a2a2a">2500</div><div class="a" style="left:49px;top:551.0px;width:1px;height:12px;background:#9a9a9a"></div><div class="a" style="left:49px;top:556.0px;width:4px;height:1px;background:#a0a0a0"></div><div class="a mono" style="left:226.50px;top:551.0px;font-size:8.75px;line-height:12px"><span style="color:#222;font-weight:bold">SendMessage</span><span style="color:#e6c090">(</span><span style="color:#6e6e6e">$sci</span></div></div><div class="a" style="left:0;top:555px;width:1200px;height:4px;background:#ece9d8;border-bottom:1px solid #8c8a80"></div><div class="a" style="left:0;top:559px;width:1200px;height:76px;background:#fff;border-left:2px solid #a09c90"></div><div class="a mono" style="left:4px;top:560.5px;font-size:8.75px;line-height:12px;color:#1a8a1a;font-weight:bold">+&gt;21:33:31 AU3Check ended.rc:0</div><div class="a mono" style="left:4px;top:572.5px;font-size:8.75px;line-height:12px;color:#3c3c94">&gt;Running:(3.3.8.0):U:\autoit\AutoIt3\autoit3.exe "U:\autoit lexer\sciteit6.au3"</div><div class="a mono" style="left:4px;top:584.5px;font-size:8.75px;line-height:12px;color:#222">New Computer: F14BDAA70E717FE66645ED8077D12485A33592B730EC7A1B</div><div class="a mono" style="left:4px;top:596.5px;font-size:8.75px;line-height:12px;color:#222">AN73364N AN27223L</div><div class="a mono" style="left:4px;top:608.5px;font-size:8.75px;line-height:12px;color:#e8a040;font-weight:bold">-1</div><div class="a" style="left:1187px;top:559px;width:13px;height:76px;background:linear-gradient(90deg,#f2f2ec,#fbfbf8)"></div><div class="a" style="left:1187px;top:560px;width:12px;height:12px;border:1px solid #c6d4f6;border-radius:2px;background:linear-gradient(135deg,#e4ecfc,#c4d4f6)"></div><svg class="a" style="left:1188px;top:562px" width="10" height="8" viewBox="0 0 10 8"><path d="M2 6l3-3 3 3" fill="none" stroke="#4d6185" stroke-width="1.6"/></svg><div class="a" style="left:1187px;top:590px;width:12px;height:30px;border:1px solid #b8c8f0;border-radius:2px;background:linear-gradient(90deg,#c0d2fa,#d0defc 50%,#bccef6)"></div><div class="a" style="left:1187px;top:622px;width:12px;height:12px;border:1px solid #c6d4f6;border-radius:2px;background:linear-gradient(135deg,#e4ecfc,#c4d4f6)"></div><svg class="a" style="left:1188px;top:624px" width="10" height="8" viewBox="0 0 10 8"><path d="M2 2l3 3 3-3" fill="none" stroke="#4d6185" stroke-width="1.6"/></svg><div class="a" style="left:0;top:635px;width:1200px;height:17px;background:#ece9d8;border-top:1px solid #d8d4c4"></div><div class="a" style="left:1px;top:637px;font-size:8.15px;line-height:15px;color:#1a1a1a;white-space:nowrap">li=2125 co=9 INS (CR+LF)</div><div class="a" style="left:0;top:652px;width:1200px;height:23px;background:linear-gradient(#4a70c8 0px,#4a70c8 1px,#3c84f0 1px,#3a80ee 3px,#2862e0 4px,#245ad8 8px,#235ad8 19px,#1e4cc4 21px,#1c48c0 23px)"></div><div class="a" style="left:0;top:652px;width:71px;height:23px;border-radius:0 9px 9px 0;background:linear-gradient(#3c9a3c 0px,#5ec45e 2px,#3aa83a 6px,#2f962f 14px,#2e8a2e 23px);box-shadow:inset -2px 0 3px rgba(0,0,0,.25)"></div><svg class="a" style="left:8px;top:655px" width="14" height="16" viewBox="0 0 14 16"><path d="M1 3q3-2 6 0v5q-3-2-6 0z" fill="#f05a28"/><path d="M7.5 3q3 2 6 0v5q-3 2-6 0z" fill="#7cbb3a"/><path d="M1 8.5q3-2 6 0v5q-3-2-6 0z" fill="#2a8ff0"/><path d="M7.5 8.5q3 2 6 0v5q-3 2-6 0z" fill="#f8c030"/></svg><div class="a" style="left:25px;top:654px;font-size:13px;line-height:19px;font-weight:bold;font-style:italic;color:#fff;text-shadow:1px 1px 1px #1a4a1a">start</div><svg class="a" style="left:84px;top:656px" width="14" height="14" viewBox="0 0 14 14"><circle cx="7" cy="7" r="6" fill="#dce8f8" stroke="#5a7ab0"/><path d="M4 4h6v6h-6z" fill="#5a8ad0"/></svg><svg class="a" style="left:103px;top:656px" width="14" height="14" viewBox="0 0 14 14"><path d="M7 2a5 5 0 1 0 5 6" fill="none" stroke="#2a9ae8" stroke-width="2.5"/><path d="M2 11q5-10 11-8" fill="none" stroke="#e8c040" stroke-width="1.2"/></svg><svg class="a" style="left:121px;top:656px" width="14" height="14" viewBox="0 0 14 14"><circle cx="7" cy="7" r="6" fill="#e84030"/><path d="M7 7L13 7A6 6 0 0 1 4 12z" fill="#f8c020"/><path d="M7 7L4 12A6 6 0 0 1 1.5 4.5z" fill="#3aa040"/><circle cx="7" cy="7" r="2.6" fill="#3a80e8" stroke="#fff"/></svg><div class="a" style="left:136px;top:655px;width:119px;height:17px;border-radius:2px;background:linear-gradient(#5a96f8,#3c80f4 3px,#3676ee 18px,#2e6ae6);box-shadow:inset 1px 1px 0 #7eb0fa"></div><svg class="a" style="left:142px;top:657px" width="14" height="14" viewBox="0 0 14 14"><path d="M7 2a5 5 0 1 0 5 6" fill="none" stroke="#3aa0f0" stroke-width="2.5"/><path d="M1.5 12q5-11 12-9" fill="none" stroke="#f0d050" stroke-width="1.2"/></svg><div class="a" style="left:158px;top:657px;font-size:8.25px;line-height:14px;color:#fff;white-space:nowrap">Need fresh perspecti...</div><div class="a" style="left:256px;top:655px;width:118px;height:17px;border-radius:2px;background:linear-gradient(#5a96f8,#3c80f4 3px,#3676ee 18px,#2e6ae6);box-shadow:inset 1px 1px 0 #7eb0fa"></div><svg class="a" style="left:262px;top:657px" width="14" height="14" viewBox="0 0 14 14"><circle cx="7" cy="7" r="6" fill="#404858" stroke="#8090a8" stroke-width="0.8"/><path d="M3.5 9.5L7 4l3.5 5.5z" fill="none" stroke="#fff" stroke-width="1.3"/></svg><div class="a" style="left:278px;top:657px;font-size:8.25px;line-height:14px;color:#fff;white-space:nowrap">U:\autoit lexer\sciteit...</div><div class="a" style="left:376px;top:655px;width:119px;height:17px;border-radius:2px;background:linear-gradient(#1e4aa8,#1f4fb8 3px,#2050c0);box-shadow:inset 1px 1px 0 #15368a"></div><svg class="a" style="left:382px;top:657px" width="14" height="14" viewBox="0 0 14 14"><circle cx="7" cy="7" r="6" fill="#404858" stroke="#8090a8" stroke-width="0.8"/><path d="M3.5 9.5L7 4l3.5 5.5z" fill="none" stroke="#fff" stroke-width="1.3"/></svg><div class="a" style="left:398px;top:657px;font-size:8.25px;line-height:14px;color:#fff;white-space:nowrap">U:\programs\rul_files...</div><div class="a" style="left:902px;top:652px;width:298px;height:23px;background:linear-gradient(#2aa6f0 0px,#5cc0f8 1px,#1ea0ec 4px,#1294e2 14px,#0f88d8 23px);border-left:1px solid #1060c0;box-shadow:inset 1px 0 1px #70c8f8"></div><svg class="a" style="left:908px;top:657px" width="12" height="12" viewBox="0 0 12 12"><circle cx="6" cy="6" r="5.5" fill="#3a4050" stroke="#a0a8b8" stroke-width="0.6"/><path d="M3 8.5L6 3.5 9 8.5z" fill="none" stroke="#fff" stroke-width="1.2"/></svg><svg class="a" style="left:922px;top:657px" width="12" height="12" viewBox="0 0 12 12"><rect x="1" y="1" width="10" height="10" fill="#c07838"/><rect x="1" y="1" width="5" height="5" fill="#e0a060"/><rect x="6" y="6" width="5" height="5" fill="#a05828"/></svg><svg class="a" style="left:936px;top:657px" width="12" height="12" viewBox="0 0 12 12"><rect x="2" y="5" width="8" height="6" rx="1" fill="#e8e8f0" stroke="#8088a0" stroke-width="0.6"/><path d="M3.5 5V3.5a2.5 2.5 0 0 1 5 0V5" fill="none" stroke="#c8d0e0" stroke-width="1.3"/></svg><svg class="a" style="left:949px;top:657px" width="12" height="12" viewBox="0 0 12 12"><rect x="0.5" y="4" width="7" height="5" fill="#d8e0f0" stroke="#5070a0" stroke-width="0.6"/><path d="M8 3q2 2 0 4M9.5 1.5q3 3.5 0 7" fill="none" stroke="#40c040" stroke-width="0.9"/></svg><svg class="a" style="left:962px;top:657px" width="12" height="12" viewBox="0 0 12 12"><circle cx="6" cy="3" r="2.3" fill="#f0a020"/><circle cx="3" cy="6" r="2.3" fill="#f0a020"/><circle cx="9" cy="6" r="2.3" fill="#f0a020"/><circle cx="4" cy="9.5" r="2.3" fill="#f0a020"/><circle cx="8" cy="9.5" r="2.3" fill="#f0a020"/><circle cx="6" cy="6.5" r="1.8" fill="#402000"/></svg><svg class="a" style="left:976px;top:657px" width="12" height="12" viewBox="0 0 12 12"><path d="M6 0v12M2 3l4 3 4-3M1 7l5 3 5-3" stroke="#30b030" stroke-width="1.4" fill="none"/></svg><svg class="a" style="left:990px;top:657px" width="12" height="12" viewBox="0 0 12 12"><rect x="0.5" y="0.5" width="11" height="8" fill="#f0f0f0" stroke="#404850"/><rect x="2" y="2" width="8" height="5" fill="#406080"/><rect x="4" y="9" width="4" height="2" fill="#606870"/><path d="M6 3v3" stroke="#fff"/></svg><svg class="a" style="left:1003px;top:657px" width="12" height="12" viewBox="0 0 12 12"><path d="M1 7h10v4H1z" fill="#2050a0"/><rect x="3" y="2" width="6" height="5" fill="#f0f0f0" stroke="#303030" stroke-width="0.6"/><circle cx="6" cy="9" r="1.5" fill="#e02020"/></svg><svg class="a" style="left:1016px;top:657px" width="12" height="12" viewBox="0 0 12 12"><path d="M1.5 1h9v5q0 4-4.5 6-4.5-2-4.5-6z" fill="#f0c030" stroke="#a08010" stroke-width="0.6"/></svg><svg class="a" style="left:1030px;top:657px" width="12" height="12" viewBox="0 0 12 12"><rect x="0" y="1" width="12" height="9" fill="#203048"/><path d="M2 8l3-4 2 2 3-3" stroke="#fff" stroke-width="1" fill="none"/><rect x="8" y="6" width="4" height="6" fill="#fff" stroke="#303030" stroke-width="0.5"/></svg><svg class="a" style="left:1044px;top:657px" width="12" height="12" viewBox="0 0 12 12"><circle cx="6" cy="6" r="5.5" fill="#e8e8e8" stroke="#808080" stroke-width="0.5"/><path d="M6 0.5A5.5 5.5 0 0 1 11.5 6H6z" fill="#d02020"/><rect x="5" y="4" width="2" height="5" fill="#d02020"/></svg><svg class="a" style="left:1057px;top:657px" width="12" height="12" viewBox="0 0 12 12"><rect x="0" y="0" width="5" height="12" fill="#303840"/><rect x="1" y="1" width="3" height="4" fill="#e0e8f0"/><rect x="6" y="4" width="6" height="4" fill="#f0f0f0" stroke="#303030" stroke-width="0.5"/></svg><svg class="a" style="left:1070px;top:657px" width="12" height="12" viewBox="0 0 12 12"><rect x="0.5" y="1" width="8" height="6" fill="#d0d8f0" stroke="#3050a0" stroke-width="0.6"/><rect x="4" y="5" width="8" height="6" fill="#3050a0"/><path d="M5 6h6v4H5z" fill="#e04040"/></svg><svg class="a" style="left:1084px;top:657px" width="12" height="12" viewBox="0 0 12 12"><rect x="0.5" y="2" width="9" height="7" fill="#d0d8f0" stroke="#3050a0" stroke-width="0.6"/><path d="M7 7l4 4M11 7l-4 4" stroke="#e02020" stroke-width="1.4"/><path d="M9 1q2 1.5 0 3" stroke="#40a040" fill="none" stroke-width="0.8"/></svg><svg class="a" style="left:1098px;top:657px" width="12" height="12" viewBox="0 0 12 12"><circle cx="4" cy="5" r="3.5" fill="#d06060"/><circle cx="8" cy="7" r="3.5" fill="#a0a0a0"/><circle cx="6" cy="6" r="1.5" fill="#f0f0f0"/></svg><svg class="a" style="left:1111px;top:657px" width="12" height="12" viewBox="0 0 12 12"><path d="M6 0l5 6H8v6H4V6H1z" fill="#30a040"/><rect x="1" y="8" width="10" height="3" fill="#405060"/></svg><svg class="a" style="left:1124px;top:657px" width="12" height="12" viewBox="0 0 12 12"><path d="M1 12V0h3l4 7V0h3v12H8L4 5v7z" fill="#e01818"/></svg><svg class="a" style="left:1138px;top:657px" width="12" height="12" viewBox="0 0 12 12"><rect x="0" y="0" width="12" height="12" fill="#fff" stroke="#30a030" stroke-width="0.8"/><path d="M1.5 2l2.5 6 2.5-6" stroke="#208020" stroke-width="1.4" fill="none"/><path d="M11 6a2.5 2.5 0 1 0 0 4" stroke="#d02020" stroke-width="1.2" fill="none"/></svg><div class="a" style="left:1157px;top:657px;font-size:8.05px;line-height:14px;color:#fff;white-space:nowrap">9:34 PM</div><div class="a" style="left:313px;top:12px;width:606px;height:625px;background:#1238cc;border-radius:7px 7px 0 0;border:1px solid #0a2494;border-top-color:#2a70f8"></div><div class="a" style="left:314px;top:13px;width:604px;height:21px;border-radius:6px 6px 0 0;background:linear-gradient(#3a8cfa 0px,#1a6ef8 1px,#0a5cf0 3px,#0656ec 8px,#0a5ef4 14px,#0a62f8 18px,#0652e8 21px)"></div><div class="a" style="left:314px;top:13px;width:604px;height:21px;border-radius:6px 6px 0 0;background:linear-gradient(90deg,rgba(255,255,255,0.06),rgba(0,0,0,0) 30%,rgba(0,0,40,0.08))"></div><div class="a" style="left:318px;top:18px;width:12px;height:12px;border-radius:50%;background:radial-gradient(circle at 45% 40%,#707a90,#1a2238 75%);box-shadow:0 0 0 1px #3a5ab8"></div><svg class="a" style="left:319px;top:18.5px" width="11" height="11" viewBox="0 0 11 11"><path d="M2.5 8 L5.5 3 L8.5 8 Z" fill="none" stroke="#f8f0d0" stroke-width="1.5"/><path d="M4 6.5h3" stroke="#f0c040" stroke-width="1"/></svg><div class="a" style="left:333px;top:16px;height:17px;line-height:17px;font-size:10px;font-weight:bold;color:#fff;white-space:nowrap;text-shadow:1px 1px 0 #0a2a98">U:\programs\rul_files\updated\conf_rfp_cmp.rul - RulEdit</div><div class="a" style="left:865px;top:16px;width:16px;height:16px;border:1px solid #fff;border-radius:2px;background:linear-gradient(135deg,#8eb0fa,#3d72ea 50%,#2a5ee0)"></div><div class="a" style="left:869px;top:26px;width:6px;height:2px;background:#ffffff"></div><div class="a" style="left:882px;top:16px;width:16px;height:16px;border:1px solid #fff;border-radius:2px;background:linear-gradient(135deg,#8eb0fa,#3d72ea 50%,#2a5ee0)"></div><div class="a" style="left:885px;top:19px;width:10px;height:10px;border:1px solid #ffffff;border-top-width:2px"></div><div class="a" style="left:899px;top:16px;width:16px;height:16px;border:1px solid #fff;border-radius:2px;background:linear-gradient(135deg,#e8927a,#d4603e 60%,#c04a2a)"></div><svg class="a" style="left:899px;top:16px" width="16" height="16"><path d="M4 4 L12 12 M12 4 L4 12" stroke="#fff" stroke-width="1.8"/></svg><div class="a" style="left:317px;top:34px;width:598px;height:599px;background:#ece9d8"></div><div class="a" style="left:320px;top:35px;font-size:8px;line-height:13px;color:#111;white-space:nowrap">File</div><div class="a" style="left:341px;top:35px;font-size:8px;line-height:13px;color:#111;white-space:nowrap">Edit</div><div class="a" style="left:363px;top:35px;font-size:8px;line-height:13px;color:#111;white-space:nowrap">Search</div><div class="a" style="left:398px;top:35px;font-size:8px;line-height:13px;color:#111;white-space:nowrap">View</div><div class="a" style="left:423px;top:35px;font-size:8px;line-height:13px;color:#111;white-space:nowrap">Options</div><div class="a" style="left:459px;top:35px;font-size:8px;line-height:13px;color:#111;white-space:nowrap">Highlighter</div><div class="a" style="left:507px;top:35px;font-size:8px;line-height:13px;color:#111;white-space:nowrap">Templates</div><div class="a" style="left:553px;top:35px;font-size:8px;line-height:13px;color:#111;white-space:nowrap">Tools</div><div class="a" style="left:580px;top:35px;font-size:8px;line-height:13px;color:#111;white-space:nowrap">Help</div><div class="a" style="left:317px;top:49px;width:598px;height:1px;background:#d4d0c0"></div><div class="a" style="left:317px;top:50px;width:598px;height:1px;background:#f2f0e6"></div><svg class="a" style="left:321px;top:53px" width="10" height="12" viewBox="0 0 10 12"><path d="M0.5 0.5h6l3 3v8h-9z" fill="#f8f8f4" stroke="#d8d8d0"/></svg><svg class="a" style="left:336px;top:53px" width="12" height="12" viewBox="0 0 12 12"><path d="M1 4h4l1 1h5v6h-10z" fill="#e8eaf0" stroke="#c0c8d8"/><path d="M3 2l6 0 2 3" stroke="#b8c0d0" fill="none"/></svg><div class="a" style="left:354px;top:52px;width:1px;height:17px;background:#cdc9b8;border-right:1px solid #fff"></div><svg class="a" style="left:370px;top:53px" width="12" height="12" viewBox="0 0 12 12"><rect x="0" y="0" width="12" height="12" rx="1" fill="#202020"/><rect x="2" y="1" width="8" height="4" fill="#e8e8e8"/><rect x="3" y="7.5" width="6" height="4.5" fill="#606060"/></svg><svg class="a" style="left:387px;top:52px" width="13" height="13" viewBox="0 0 13 13"><path d="M0 4l8-3 4 8-8 3z" fill="#303030"/><path d="M2 5l5-2 2 4-5 2z" fill="#b0a890"/><path d="M9 1l3 3" stroke="#e8c040" stroke-width="2"/></svg><div class="a" style="left:404px;top:52px;width:1px;height:17px;background:#cdc9b8;border-right:1px solid #fff"></div><svg class="a" style="left:420px;top:53px" width="9" height="12" viewBox="0 0 9 12"><path d="M2 1l4 7M6 1l-3 5" stroke="#c8d0e0" stroke-width="1.3"/><circle cx="3" cy="9.5" r="2" fill="none" stroke="#b8c4dc"/></svg><svg class="a" style="left:439px;top:53px" width="10" height="12" viewBox="0 0 10 12"><path d="M0.5 0.5h6l3 3v8h-9z" fill="#f8f8f4" stroke="#d8d8d0"/></svg><svg class="a" style="left:455px;top:53px" width="11" height="12" viewBox="0 0 11 12"><rect x="0.5" y="1.5" width="9" height="10" fill="#e8d8b8" stroke="#d0c0a0"/><rect x="4" y="4" width="7" height="8" fill="#f8f8f4" stroke="#d8d8d0"/></svg><div class="a" style="left:472px;top:52px;width:1px;height:17px;background:#cdc9b8;border-right:1px solid #fff"></div><svg class="a" style="left:488px;top:54px" width="13" height="10" viewBox="0 0 13 10"><circle cx="3.5" cy="6" r="3" fill="#303038"/><circle cx="9.5" cy="6" r="3" fill="#303038"/><rect x="3" y="2" width="7" height="4" fill="#404048"/></svg><svg class="a" style="left:506px;top:53px" width="12" height="12" viewBox="0 0 12 12"><rect x="0.5" y="0.5" width="9" height="11" fill="#f4f4f0" stroke="#d8d8d0"/><circle cx="6" cy="6" r="3" fill="none" stroke="#c0c8d8" stroke-width="1.2"/><path d="M8 8l3 3" stroke="#c0c8d8" stroke-width="1.5"/></svg><div class="a" style="left:524px;top:52px;width:1px;height:17px;background:#cdc9b8;border-right:1px solid #fff"></div><svg class="a" style="left:538px;top:52px" width="14" height="13" viewBox="0 0 14 13"><path d="M10.5 11.5A4.8 4.8 0 1 0 3.5 5" fill="none" stroke="#2a5ad0" stroke-width="2.2"/><path d="M0.5 3.5L3.8 7.8 6.8 3.6z" fill="#2a5ad0"/></svg><svg class="a" style="left:556px;top:52px" width="14" height="13" viewBox="0 0 14 13"><path d="M3.5 11.5A4.8 4.8 0 1 1 10.5 5" fill="none" stroke="#2a5ad0" stroke-width="2.2"/><path d="M13.5 3.5L10.2 7.8 7.2 3.6z" fill="#2a5ad0"/></svg><div class="a" style="left:576px;top:52px;width:1px;height:17px;background:#cdc9b8;border-right:1px solid #fff"></div><svg class="a" style="left:591px;top:54px" width="12" height="10" viewBox="0 0 12 10"><path d="M1 5l3.5 4L11 1" fill="none" stroke="#6ab83a" stroke-width="2"/></svg><div class="a" style="left:610px;top:52px;width:1px;height:17px;background:#cdc9b8;border-right:1px solid #fff"></div><svg class="a" style="left:625px;top:53px" width="12" height="12" viewBox="0 0 12 12"><rect x="0.5" y="0.5" width="11" height="11" fill="#4a80b8" stroke="#2a5080"/><path d="M2 9l4-6 4 6z" fill="#7ac050"/></svg><svg class="a" style="left:642px;top:54px" width="12" height="10" viewBox="0 0 12 10"><rect x="0" y="1" width="2" height="8" fill="#3a9a20"/><path d="M2 5l5-4v2.5h5v3h-5V9z" fill="#4ab030"/></svg><svg class="a" style="left:659px;top:54px" width="12" height="10" viewBox="0 0 12 10"><path d="M0 5l5-4v2.5h7v3H5V9z" fill="#8ac838" stroke="#5a9a20" stroke-width="0.5"/></svg><svg class="a" style="left:676px;top:54px" width="12" height="10" viewBox="0 0 12 10"><path d="M12 5L7 1v2.5H0v3h7V9z" fill="#8ac838" stroke="#5a9a20" stroke-width="0.5"/></svg><svg class="a" style="left:694px;top:53px" width="11" height="12" viewBox="0 0 11 12"><path d="M1 0.5l9 5.5-9 5.5z" fill="#2a9a2a"/><path d="M1 0.5l9 5.5-9 0z" fill="#40b840"/><rect x="0" y="0.5" width="2" height="11" fill="#208020"/></svg><div class="a" style="left:711px;top:52px;width:1px;height:17px;background:#cdc9b8;border-right:1px solid #fff"></div><svg class="a" style="left:728px;top:53px" width="11" height="12" viewBox="0 0 11 12"><path d="M1 1l2 0 7 8 0 2-2 0-7-8z" fill="#d0d0c8" stroke="#b8b8b0" stroke-width="0.6"/></svg><div class="a" style="left:317px;top:72px;width:598px;height:1px;background:#a8a494"></div><div class="a" style="left:318px;top:73px;width:30px;height:484px;background:#ebe9d6"></div><div class="a" style="left:348px;top:73px;width:15px;height:484px;background:linear-gradient(90deg,#f0efe6,#f8f8f2 50%,#f0f0e8)"></div><div class="a" style="left:363px;top:73px;width:540px;height:484px;background:#ffffe1"></div><div class="a" style="left:903px;top:73px;width:12px;height:484px;background:linear-gradient(90deg,#f0f0ea,#fbfbf8)"></div><div class="a" style="left:903px;top:74px;width:12px;height:12px;border:1px solid #c2d2f4;border-radius:2px;background:linear-gradient(135deg,#e6eefc,#c6d6f8)"></div><svg class="a" style="left:904px;top:76px" width="10" height="8" viewBox="0 0 10 8"><path d="M2 6l3-3 3 3" fill="none" stroke="#4d6185" stroke-width="1.6"/></svg><div class="a" style="left:903px;top:150px;width:12px;height:126px;border:1px solid #b4c6f0;border-radius:2px;background:linear-gradient(90deg,#c0d2fa,#d0defc 50%,#bccef6)"></div><div class="a" style="left:903px;top:544px;width:12px;height:12px;border:1px solid #c2d2f4;border-radius:2px;background:linear-gradient(135deg,#e6eefc,#c6d6f8)"></div><svg class="a" style="left:904px;top:546px" width="10" height="8" viewBox="0 0 10 8"><path d="M2 2l3 3 3-3" fill="none" stroke="#4d6185" stroke-width="1.6"/></svg><div class="a" style="left:318px;top:557px;width:585px;height:12px;background:linear-gradient(#f0f0ea,#fbfbf8)"></div><div class="a" style="left:318px;top:557px;width:13px;height:12px;border:1px solid #c2d2f4;border-radius:2px;background:linear-gradient(135deg,#e6eefc,#c6d6f8)"></div><svg class="a" style="left:320px;top:559px" width="9" height="8" viewBox="0 0 9 8"><path d="M6 1l-3 3 3 3" fill="none" stroke="#4d6185" stroke-width="1.6"/></svg><div class="a" style="left:332px;top:557px;width:198px;height:12px;border:1px solid #b4c6f0;border-radius:2px;background:linear-gradient(#c0d2fa,#d0defc 50%,#bccef6)"></div><div class="a" style="left:890px;top:557px;width:13px;height:12px;border:1px solid #c2d2f4;border-radius:2px;background:linear-gradient(135deg,#e6eefc,#c6d6f8)"></div><svg class="a" style="left:892px;top:559px" width="9" height="8" viewBox="0 0 9 8"><path d="M3 1l3 3-3 3" fill="none" stroke="#4d6185" stroke-width="1.6"/></svg><div class="a" style="left:903px;top:557px;width:12px;height:12px;background:#ece9d8"></div><div class="a" style="left:317px;top:569px;width:598px;height:6px;background:#ece9d8;border-bottom:1px solid #a8a494"></div><div class="a" style="left:318px;top:575px;width:597px;height:58px;background:#fff"></div><div class="a" style="left:319px;top:576px;font-size:7.9px;line-height:12px;color:#111;white-space:nowrap">No errors found</div><div class="a" style="left:903px;top:575px;width:12px;height:46px;background:#f4f4ee"></div><div class="a" style="left:903px;top:576px;width:12px;height:12px;border:1px solid #e0e0d8;border-radius:2px;background:#f0f0ea"></div><div class="a" style="left:903px;top:608px;width:12px;height:12px;border:1px solid #e0e0d8;border-radius:2px;background:#f0f0ea"></div><div class="a" style="left:318px;top:621px;width:597px;height:12px;background:linear-gradient(#f2f2ec,#fbfbf8)"></div><div class="a" style="left:318px;top:621px;width:13px;height:12px;border:1px solid #e0e0d8;border-radius:2px;background:#f0f0ea"></div><div class="a" style="left:890px;top:621px;width:13px;height:12px;border:1px solid #e0e0d8;border-radius:2px;background:#f0f0ea"></div><svg class="a" style="left:904px;top:578px" width="10" height="8" viewBox="0 0 10 8"><path d="M2 6l3-3 3 3" fill="none" stroke="#c8c8c0" stroke-width="1.4"/></svg><svg class="a" style="left:904px;top:610px" width="10" height="8" viewBox="0 0 10 8"><path d="M2 2l3 3 3-3" fill="none" stroke="#c8c8c0" stroke-width="1.4"/></svg><svg class="a" style="left:320px;top:623px" width="9" height="8" viewBox="0 0 9 8"><path d="M6 1l-3 3 3 3" fill="none" stroke="#c8c8c0" stroke-width="1.4"/></svg><svg class="a" style="left:892px;top:623px" width="9" height="8" viewBox="0 0 9 8"><path d="M3 1l3 3-3 3" fill="none" stroke="#c8c8c0" stroke-width="1.4"/></svg><div class="a" style="left:903px;top:621px;width:12px;height:12px;background:#ece9d8"></div><svg class="a" style="left:904px;top:622px" width="11" height="11" viewBox="0 0 11 11"><g fill="#d8a8a0"><rect x="8" y="2" width="2" height="2"/><rect x="5" y="5" width="2" height="2"/><rect x="8" y="5" width="2" height="2"/><rect x="2" y="8" width="2" height="2"/><rect x="5" y="8" width="2" height="2"/><rect x="8" y="8" width="2" height="2"/></g></svg><div class="a" style="left:0;top:0;width:903px;height:557px;overflow:hidden"><div class="a mono" style="left:318px;top:75.50px;width:28px;text-align:right;font-size:10px;line-height:14.25px;color:#2a2a2a">18</div><div class="a" style="left:351px;top:79.50px;width:10px;height:4px;background:#505050;border-radius:1px"></div><div class="a" style="left:352px;top:81.00px;width:8px;height:1px;background:#b0b0b0"></div><div class="a mono" style="left:364.00px;top:75.50px;font-size:10px;line-height:14.25px;color:#c81818;font-weight:bold">RULE</div><div class="a mono" style="left:318px;top:89.75px;width:28px;text-align:right;font-size:10px;line-height:14.25px;color:#2a2a2a">19</div><div class="a mono" style="left:364.00px;top:89.75px;font-size:10px;line-height:14.25px;color:#e2bcd8;letter-spacing:1.00px">(</div><div class="a mono" style="left:318px;top:104.00px;width:28px;text-align:right;font-size:10px;line-height:14.25px;color:#2a2a2a">20</div><svg class="a" style="left:364.0px;top:102.00px" width="24.0" height="14"><path d="M2 6.5H22.5M19.0 3.8L22.5 6.5L19.0 9.2" fill="none" stroke="#34342a" stroke-width="1"/></svg><div class="a mono" style="left:388.00px;top:104.00px;font-size:10px;line-height:14.25px;color:#1c1c1c">REFLEXSITE</div><div class="a mono" style="left:448.00px;top:104.00px;font-size:10px;line-height:14.25px;color:#b0b8a0">·</div><div class="a mono" style="left:454.00px;top:104.00px;font-size:10px;line-height:14.25px;color:#e0b0d8;letter-spacing:1.00px">=</div><div class="a mono" style="left:461.00px;top:104.00px;font-size:10px;line-height:14.25px;color:#b0b8a0">·</div><div class="a mono" style="left:467.00px;top:104.00px;font-size:10px;line-height:14.25px;color:#acacb8">'FALSE'</div><div class="a mono" style="left:509.00px;top:104.00px;font-size:10px;line-height:14.25px;color:#b0b8a0">·</div><div class="a mono" style="left:515.00px;top:104.00px;font-size:10px;line-height:14.25px;color:#e040e0;font-weight:bold">AND</div><div class="a mono" style="left:533.00px;top:104.00px;font-size:10px;line-height:14.25px;color:#b0b8a0">·</div><div class="a mono" style="left:318px;top:118.25px;width:28px;text-align:right;font-size:10px;line-height:14.25px;color:#2a2a2a">21</div><svg class="a" style="left:364.0px;top:116.25px" width="24.0" height="14"><path d="M2 6.5H22.5M19.0 3.8L22.5 6.5L19.0 9.2" fill="none" stroke="#34342a" stroke-width="1"/></svg><div class="a mono" style="left:388.00px;top:118.25px;font-size:10px;line-height:14.25px;color:#1c1c1c">RFP</div><div class="a mono" style="left:406.00px;top:118.25px;font-size:10px;line-height:14.25px;color:#d8d8d0;letter-spacing:1.00px">.</div><div class="a mono" style="left:413.00px;top:118.25px;font-size:10px;line-height:14.25px;color:#1a1a9a;font-weight:bold;font-style:italic;text-decoration:underline">FINDTEST</div><div class="a mono" style="left:461.00px;top:118.25px;font-size:10px;line-height:14.25px;color:#b0b8a0">·</div><div class="a mono" style="left:467.00px;top:118.25px;font-size:10px;line-height:14.25px;color:#e040e0;font-weight:bold">AND</div><div class="a mono" style="left:485.00px;top:118.25px;font-size:10px;line-height:14.25px;color:#b0b8a0">·</div><div class="a mono" style="left:318px;top:132.50px;width:28px;text-align:right;font-size:10px;line-height:14.25px;color:#2a2a2a">22</div><svg class="a" style="left:364.0px;top:130.50px" width="24.0" height="14"><path d="M2 6.5H22.5M19.0 3.8L22.5 6.5L19.0 9.2" fill="none" stroke="#34342a" stroke-width="1"/></svg><div class="a mono" style="left:388.00px;top:132.50px;font-size:10px;line-height:14.25px;color:#1c1c1c">CMP</div><div class="a mono" style="left:406.00px;top:132.50px;font-size:10px;line-height:14.25px;color:#d8d8d0;letter-spacing:1.00px">.</div><div class="a mono" style="left:413.00px;top:132.50px;font-size:10px;line-height:14.25px;color:#1a1a9a;font-weight:bold;font-style:italic;text-decoration:underline">FINDTEST</div><div class="a mono" style="left:461.00px;top:132.50px;font-size:10px;line-height:14.25px;color:#b0b8a0">·</div><div class="a mono" style="left:467.00px;top:132.50px;font-size:10px;line-height:14.25px;color:#e040e0;font-weight:bold">AND</div><div class="a mono" style="left:485.00px;top:132.50px;font-size:10px;line-height:14.25px;color:#b0b8a0">·</div><div class="a mono" style="left:318px;top:146.75px;width:28px;text-align:right;font-size:10px;line-height:14.25px;color:#2a2a2a">23</div><svg class="a" style="left:364.0px;top:144.75px" width="24.0" height="14"><path d="M2 6.5H22.5M19.0 3.8L22.5 6.5L19.0 9.2" fill="none" stroke="#34342a" stroke-width="1"/></svg><div class="a" style="left:388.00px;top:144.75px;width:18.00px;height:14.25px;background:#6af0f0"></div><div class="a mono" style="left:388.00px;top:146.75px;font-size:10px;line-height:14.25px;color:#08a040;font-weight:bold">ABS</div><div class="a mono" style="left:406.00px;top:146.75px;font-size:10px;line-height:14.25px;color:#e2bcd8;letter-spacing:1.00px">(</div><div class="a" style="left:413.00px;top:144.75px;width:36.00px;height:14.25px;background:#6af0f0"></div><div class="a mono" style="left:413.00px;top:146.75px;font-size:10px;line-height:14.25px;color:#08a040;font-weight:bold">NUMBER</div><div class="a mono" style="left:449.00px;top:146.75px;font-size:10px;line-height:14.25px;color:#e2bcd8;letter-spacing:1.00px">(</div><div class="a mono" style="left:456.00px;top:146.75px;font-size:10px;line-height:14.25px;color:#1c1c1c">RFP</div><div class="a mono" style="left:474.00px;top:146.75px;font-size:10px;line-height:14.25px;color:#d8d8d0;letter-spacing:1.00px">.</div><div class="a mono" style="left:481.00px;top:146.75px;font-size:10px;line-height:14.25px;color:#1a1a9a;font-weight:bold;font-style:italic;text-decoration:underline">EXPECTED</div><div class="a mono" style="left:529.00px;top:146.75px;font-size:10px;line-height:14.25px;color:#b0b8a0">·</div><div class="a mono" style="left:535.00px;top:146.75px;font-size:10px;line-height:14.25px;color:#e0b0d8;letter-spacing:1.00px">-</div><div class="a mono" style="left:542.00px;top:146.75px;font-size:10px;line-height:14.25px;color:#b0b8a0">·</div><div class="a mono" style="left:548.00px;top:146.75px;font-size:10px;line-height:14.25px;color:#1c1c1c">CMP</div><div class="a mono" style="left:566.00px;top:146.75px;font-size:10px;line-height:14.25px;color:#d8d8d0;letter-spacing:1.00px">.</div><div class="a mono" style="left:573.00px;top:146.75px;font-size:10px;line-height:14.25px;color:#1a1a9a;font-weight:bold;font-style:italic;text-decoration:underline">EXPECTED</div><div class="a mono" style="left:621.00px;top:146.75px;font-size:10px;line-height:14.25px;color:#e2bcd8;letter-spacing:1.00px">)</div><div class="a mono" style="left:628.00px;top:146.75px;font-size:10px;line-height:14.25px;color:#e2bcd8;letter-spacing:1.00px">)</div><div class="a mono" style="left:638.50px;top:146.75px;font-size:10px;line-height:14.25px;color:#b0b8a0">·</div><div class="a mono" style="left:644.50px;top:146.75px;font-size:10px;line-height:14.25px;color:#e0b0d8;letter-spacing:1.00px">&lt;</div><div class="a mono" style="left:651.50px;top:146.75px;font-size:10px;line-height:14.25px;color:#e0b0d8;letter-spacing:1.00px">=</div><div class="a mono" style="left:658.50px;top:146.75px;font-size:10px;line-height:14.25px;color:#1c1c1c">TIMELIMIT</div><div class="a mono" style="left:712.50px;top:146.75px;font-size:10px;line-height:14.25px;color:#b0b8a0">·</div><div class="a mono" style="left:718.50px;top:146.75px;font-size:10px;line-height:14.25px;color:#e040e0;font-weight:bold">AND</div><div class="a mono" style="left:736.50px;top:146.75px;font-size:10px;line-height:14.25px;color:#b0b8a0">·</div><div class="a mono" style="left:318px;top:161.00px;width:28px;text-align:right;font-size:10px;line-height:14.25px;color:#2a2a2a">24</div><svg class="a" style="left:364.0px;top:159.00px" width="24.0" height="14"><path d="M2 6.5H22.5M19.0 3.8L22.5 6.5L19.0 9.2" fill="none" stroke="#34342a" stroke-width="1"/></svg><div class="a" style="left:388.00px;top:159.00px;width:18.00px;height:14.25px;background:#f07cf0"></div><div class="a mono" style="left:388.00px;top:161.00px;font-size:10px;line-height:14.25px;color:#1c1cb8;font-weight:bold">NOT</div><div class="a mono" style="left:406.00px;top:161.00px;font-size:10px;line-height:14.25px;color:#b0b8a0">·</div><div class="a" style="left:412.00px;top:159.00px;width:30.00px;height:14.25px;background:#6af0f0"></div><div class="a mono" style="left:412.00px;top:161.00px;font-size:10px;line-height:14.25px;color:#08a040;font-weight:bold">MATCH</div><div class="a mono" style="left:442.00px;top:161.00px;font-size:10px;line-height:14.25px;color:#e2bcd8;letter-spacing:1.00px">(</div><div class="a mono" style="left:449.00px;top:161.00px;font-size:10px;line-height:14.25px;color:#1c1c1c">CMP</div><div class="a mono" style="left:467.00px;top:161.00px;font-size:10px;line-height:14.25px;color:#d8d8d0;letter-spacing:1.00px">.</div><div class="a mono" style="left:474.00px;top:161.00px;font-size:10px;line-height:14.25px;color:#1a1a9a;font-weight:bold;font-style:italic;text-decoration:underline">STATUS</div><div class="a mono" style="left:510.00px;top:161.00px;font-size:10px;line-height:14.25px;color:#d8d8d0;letter-spacing:1.00px">,</div><div class="a mono" style="left:517.00px;top:161.00px;font-size:10px;line-height:14.25px;color:#acacb8">"V"</div><div class="a mono" style="left:535.00px;top:161.00px;font-size:10px;line-height:14.25px;color:#d8d8d0;letter-spacing:1.00px">,</div><div class="a mono" style="left:542.00px;top:161.00px;font-size:10px;line-height:14.25px;color:#acacb8">"D"</div><div class="a mono" style="left:560.00px;top:161.00px;font-size:10px;line-height:14.25px;color:#d8d8d0;letter-spacing:1.00px">,</div><div class="a mono" style="left:567.00px;top:161.00px;font-size:10px;line-height:14.25px;color:#acacb8">"X"</div><div class="a mono" style="left:585.00px;top:161.00px;font-size:10px;line-height:14.25px;color:#e2bcd8;letter-spacing:1.00px">)</div><div class="a mono" style="left:592.00px;top:161.00px;font-size:10px;line-height:14.25px;color:#b0b8a0">·</div><div class="a mono" style="left:598.00px;top:161.00px;font-size:10px;line-height:14.25px;color:#e040e0;font-weight:bold">AND</div><div class="a mono" style="left:616.00px;top:161.00px;font-size:10px;line-height:14.25px;color:#b0b8a0">·</div><div class="a mono" style="left:318px;top:175.25px;width:28px;text-align:right;font-size:10px;line-height:14.25px;color:#2a2a2a">25</div><svg class="a" style="left:364.0px;top:173.25px" width="24.0" height="14"><path d="M2 6.5H22.5M19.0 3.8L22.5 6.5L19.0 9.2" fill="none" stroke="#34342a" stroke-width="1"/></svg><div class="a" style="left:388.00px;top:173.25px;width:18.00px;height:14.25px;background:#f07cf0"></div><div class="a mono" style="left:388.00px;top:175.25px;font-size:10px;line-height:14.25px;color:#1c1cb8;font-weight:bold">NOT</div><div class="a mono" style="left:406.00px;top:175.25px;font-size:10px;line-height:14.25px;color:#b0b8a0">·</div><div class="a" style="left:412.00px;top:173.25px;width:30.00px;height:14.25px;background:#6af0f0"></div><div class="a mono" style="left:412.00px;top:175.25px;font-size:10px;line-height:14.25px;color:#08a040;font-weight:bold">MATCH</div><div class="a mono" style="left:442.00px;top:175.25px;font-size:10px;line-height:14.25px;color:#e2bcd8;letter-spacing:1.00px">(</div><div class="a mono" style="left:449.00px;top:175.25px;font-size:10px;line-height:14.25px;color:#1c1c1c">RFP</div><div class="a mono" style="left:467.00px;top:175.25px;font-size:10px;line-height:14.25px;color:#d8d8d0;letter-spacing:1.00px">.</div><div class="a mono" style="left:474.00px;top:175.25px;font-size:10px;line-height:14.25px;color:#1a1a9a;font-weight:bold;font-style:italic;text-decoration:underline">STATUS</div><div class="a mono" style="left:510.00px;top:175.25px;font-size:10px;line-height:14.25px;color:#d8d8d0;letter-spacing:1.00px">,</div><div class="a mono" style="left:517.00px;top:175.25px;font-size:10px;line-height:14.25px;color:#acacb8">"L"</div><div class="a mono" style="left:535.00px;top:175.25px;font-size:10px;line-height:14.25px;color:#d8d8d0;letter-spacing:1.00px">,</div><div class="a mono" style="left:542.00px;top:175.25px;font-size:10px;line-height:14.25px;color:#acacb8">"A"</div><div class="a mono" style="left:560.00px;top:175.25px;font-size:10px;line-height:14.25px;color:#d8d8d0;letter-spacing:1.00px">,</div><div class="a mono" style="left:567.00px;top:175.25px;font-size:10px;line-height:14.25px;color:#acacb8">"T"</div><div class="a mono" style="left:585.00px;top:175.25px;font-size:10px;line-height:14.25px;color:#d8d8d0;letter-spacing:1.00px">,</div><div class="a mono" style="left:592.00px;top:175.25px;font-size:10px;line-height:14.25px;color:#acacb8">"G"</div><div class="a mono" style="left:610.00px;top:175.25px;font-size:10px;line-height:14.25px;color:#d8d8d0;letter-spacing:1.00px">,</div><div class="a mono" style="left:617.00px;top:175.25px;font-size:10px;line-height:14.25px;color:#acacb8">"I"</div><div class="a mono" style="left:635.00px;top:175.25px;font-size:10px;line-height:14.25px;color:#d8d8d0;letter-spacing:1.00px">,</div><div class="a mono" style="left:642.00px;top:175.25px;font-size:10px;line-height:14.25px;color:#acacb8">"V"</div><div class="a mono" style="left:660.00px;top:175.25px;font-size:10px;line-height:14.25px;color:#d8d8d0;letter-spacing:1.00px">,</div><div class="a mono" style="left:667.00px;top:175.25px;font-size:10px;line-height:14.25px;color:#acacb8">"D"</div><div class="a mono" style="left:685.00px;top:175.25px;font-size:10px;line-height:14.25px;color:#d8d8d0;letter-spacing:1.00px">,</div><div class="a mono" style="left:692.00px;top:175.25px;font-size:10px;line-height:14.25px;color:#acacb8">"X"</div><div class="a mono" style="left:710.00px;top:175.25px;font-size:10px;line-height:14.25px;color:#e2bcd8;letter-spacing:1.00px">)</div><div class="a mono" style="left:717.00px;top:175.25px;font-size:10px;line-height:14.25px;color:#b0b8a0">·</div><div class="a mono" style="left:723.00px;top:175.25px;font-size:10px;line-height:14.25px;color:#e040e0;font-weight:bold">AND</div><div class="a mono" style="left:741.00px;top:175.25px;font-size:10px;line-height:14.25px;color:#b0b8a0">·</div><div class="a mono" style="left:318px;top:189.50px;width:28px;text-align:right;font-size:10px;line-height:14.25px;color:#2a2a2a">26</div><svg class="a" style="left:364.0px;top:187.50px" width="24.0" height="14"><path d="M2 6.5H22.5M19.0 3.8L22.5 6.5L19.0 9.2" fill="none" stroke="#34342a" stroke-width="1"/></svg><div class="a mono" style="left:388.00px;top:189.50px;font-size:10px;line-height:14.25px;color:#e2bcd8;letter-spacing:1.00px">(</div><div class="a mono" style="left:318px;top:203.75px;width:28px;text-align:right;font-size:10px;line-height:14.25px;color:#2a2a2a">27</div><svg class="a" style="left:364.0px;top:201.75px" width="24.0" height="14"><path d="M2 6.5H22.5M19.0 3.8L22.5 6.5L19.0 9.2" fill="none" stroke="#34342a" stroke-width="1"/></svg><div class="a" style="left:388.0px;top:201.75px;width:1px;height:14.25px;background:repeating-linear-gradient(#707070 0 1px,transparent 1px 2px)"></div><svg class="a" style="left:388.0px;top:201.75px" width="24.0" height="14"><path d="M2 6.5H22.5M19.0 3.8L22.5 6.5L19.0 9.2" fill="none" stroke="#34342a" stroke-width="1"/></svg><div class="a mono" style="left:412.00px;top:203.75px;font-size:10px;line-height:14.25px;color:#e2bcd8;letter-spacing:1.00px">(</div><div class="a" style="left:419.00px;top:201.75px;width:18.00px;height:14.25px;background:#f07cf0"></div><div class="a mono" style="left:419.00px;top:203.75px;font-size:10px;line-height:14.25px;color:#1c1cb8;font-weight:bold">NOT</div><div class="a mono" style="left:437.00px;top:203.75px;font-size:10px;line-height:14.25px;color:#b0b8a0">·</div><div class="a" style="left:443.00px;top:201.75px;width:30.00px;height:14.25px;background:#6af0f0"></div><div class="a mono" style="left:443.00px;top:203.75px;font-size:10px;line-height:14.25px;color:#08a040;font-weight:bold">MATCH</div><div class="a mono" style="left:473.00px;top:203.75px;font-size:10px;line-height:14.25px;color:#e2bcd8;letter-spacing:1.00px">(</div><div class="a mono" style="left:480.00px;top:203.75px;font-size:10px;line-height:14.25px;color:#1c1c1c">RFP</div><div class="a mono" style="left:498.00px;top:203.75px;font-size:10px;line-height:14.25px;color:#d8d8d0;letter-spacing:1.00px">.</div><div class="a mono" style="left:505.00px;top:203.75px;font-size:10px;line-height:14.25px;color:#1a1a9a;font-weight:bold;font-style:italic;text-decoration:underline">PLCODE</div><div class="a mono" style="left:541.00px;top:203.75px;font-size:10px;line-height:14.25px;color:#d8d8d0;letter-spacing:1.00px">,</div><div class="a mono" style="left:548.00px;top:203.75px;font-size:10px;line-height:14.25px;color:#acacb8">"S"</div><div class="a mono" style="left:566.00px;top:203.75px;font-size:10px;line-height:14.25px;color:#e2bcd8;letter-spacing:1.00px">)</div><div class="a mono" style="left:573.00px;top:203.75px;font-size:10px;line-height:14.25px;color:#e2bcd8;letter-spacing:1.00px">)</div><div class="a mono" style="left:580.00px;top:203.75px;font-size:10px;line-height:14.25px;color:#b0b8a0">·</div><div class="a mono" style="left:586.00px;top:203.75px;font-size:10px;line-height:14.25px;color:#e040e0;font-weight:bold">OR</div><div class="a mono" style="left:598.00px;top:203.75px;font-size:10px;line-height:14.25px;color:#b0b8a0">·</div><div class="a mono" style="left:318px;top:218.00px;width:28px;text-align:right;font-size:10px;line-height:14.25px;color:#2a2a2a">28</div><svg class="a" style="left:364.0px;top:216.00px" width="24.0" height="14"><path d="M2 6.5H22.5M19.0 3.8L22.5 6.5L19.0 9.2" fill="none" stroke="#34342a" stroke-width="1"/></svg><div class="a" style="left:388.0px;top:216.00px;width:1px;height:14.25px;background:repeating-linear-gradient(#707070 0 1px,transparent 1px 2px)"></div><svg class="a" style="left:388.0px;top:216.00px" width="24.0" height="14"><path d="M2 6.5H22.5M19.0 3.8L22.5 6.5L19.0 9.2" fill="none" stroke="#34342a" stroke-width="1"/></svg><div class="a mono" style="left:412.00px;top:218.00px;font-size:10px;line-height:14.25px;color:#e2bcd8;letter-spacing:1.00px">(</div><div class="a" style="left:419.00px;top:216.00px;width:30.00px;height:14.25px;background:#6af0f0"></div><div class="a mono" style="left:419.00px;top:218.00px;font-size:10px;line-height:14.25px;color:#08a040;font-weight:bold">MATCH</div><div class="a mono" style="left:449.00px;top:218.00px;font-size:10px;line-height:14.25px;color:#e2bcd8;letter-spacing:1.00px">(</div><div class="a mono" style="left:456.00px;top:218.00px;font-size:10px;line-height:14.25px;color:#1c1c1c">RFP</div><div class="a mono" style="left:474.00px;top:218.00px;font-size:10px;line-height:14.25px;color:#d8d8d0;letter-spacing:1.00px">.</div><div class="a mono" style="left:481.00px;top:218.00px;font-size:10px;line-height:14.25px;color:#1a1a9a;font-weight:bold;font-style:italic;text-decoration:underline">PLCODE</div><div class="a mono" style="left:517.00px;top:218.00px;font-size:10px;line-height:14.25px;color:#d8d8d0;letter-spacing:1.00px">,</div><div class="a mono" style="left:524.00px;top:218.00px;font-size:10px;line-height:14.25px;color:#acacb8">"S"</div><div class="a mono" style="left:542.00px;top:218.00px;font-size:10px;line-height:14.25px;color:#e2bcd8;letter-spacing:1.00px">)</div><div class="a mono" style="left:549.00px;top:218.00px;font-size:10px;line-height:14.25px;color:#b0b8a0">·</div><div class="a mono" style="left:555.00px;top:218.00px;font-size:10px;line-height:14.25px;color:#e040e0;font-weight:bold">AND</div><div class="a mono" style="left:573.00px;top:218.00px;font-size:10px;line-height:14.25px;color:#b0b8a0">·</div><div class="a" style="left:579.00px;top:216.00px;width:30.00px;height:14.25px;background:#6af0f0"></div><div class="a mono" style="left:579.00px;top:218.00px;font-size:10px;line-height:14.25px;color:#08a040;font-weight:bold">MATCH</div><div class="a mono" style="left:609.00px;top:218.00px;font-size:10px;line-height:14.25px;color:#e2bcd8;letter-spacing:1.00px">(</div><div class="a mono" style="left:616.00px;top:218.00px;font-size:10px;line-height:14.25px;color:#1c1c1c">CMP</div><div class="a mono" style="left:634.00px;top:218.00px;font-size:10px;line-height:14.25px;color:#d8d8d0;letter-spacing:1.00px">.</div><div class="a mono" style="left:641.00px;top:218.00px;font-size:10px;line-height:14.25px;color:#1a1a9a;font-weight:bold;font-style:italic;text-decoration:underline">PLCODE</div><div class="a mono" style="left:677.00px;top:218.00px;font-size:10px;line-height:14.25px;color:#d8d8d0;letter-spacing:1.00px">,</div><div class="a mono" style="left:684.00px;top:218.00px;font-size:10px;line-height:14.25px;color:#acacb8">"S"</div><div class="a mono" style="left:702.00px;top:218.00px;font-size:10px;line-height:14.25px;color:#e2bcd8;letter-spacing:1.00px">)</div><div class="a mono" style="left:709.00px;top:218.00px;font-size:10px;line-height:14.25px;color:#e2bcd8;letter-spacing:1.00px">)</div><div class="a mono" style="left:318px;top:232.25px;width:28px;text-align:right;font-size:10px;line-height:14.25px;color:#2a2a2a">29</div><svg class="a" style="left:364.0px;top:230.25px" width="24.0" height="14"><path d="M2 6.5H22.5M19.0 3.8L22.5 6.5L19.0 9.2" fill="none" stroke="#34342a" stroke-width="1"/></svg><div class="a mono" style="left:388.00px;top:232.25px;font-size:10px;line-height:14.25px;color:#e2bcd8;letter-spacing:1.00px">)</div><div class="a mono" style="left:318px;top:246.50px;width:28px;text-align:right;font-size:10px;line-height:14.25px;color:#2a2a2a">30</div><div class="a mono" style="left:364.00px;top:246.50px;font-size:10px;line-height:14.25px;color:#e2bcd8;letter-spacing:1.00px">)</div><div class="a mono" style="left:318px;top:260.75px;width:28px;text-align:right;font-size:10px;line-height:14.25px;color:#2a2a2a">31</div><div class="a mono" style="left:364.00px;top:260.75px;font-size:10px;line-height:14.25px;color:#e2bcd8;letter-spacing:1.00px">(</div><div class="a mono" style="left:318px;top:275.00px;width:28px;text-align:right;font-size:10px;line-height:14.25px;color:#2a2a2a">32</div><svg class="a" style="left:364.0px;top:273.00px" width="24.0" height="14"><path d="M2 6.5H22.5M19.0 3.8L22.5 6.5L19.0 9.2" fill="none" stroke="#34342a" stroke-width="1"/></svg><div class="a mono" style="left:388.00px;top:275.00px;font-size:10px;line-height:14.25px;color:#1c1c1c">RFP</div><div class="a mono" style="left:406.00px;top:275.00px;font-size:10px;line-height:14.25px;color:#d8d8d0;letter-spacing:1.00px">.</div><div class="a mono" style="left:413.00px;top:275.00px;font-size:10px;line-height:14.25px;color:#1a1a9a;font-weight:bold;font-style:italic;text-decoration:underline">CANCELTEST</div><div class="a mono" style="left:473.00px;top:275.00px;font-size:10px;line-height:14.25px;color:#e2bcd8;letter-spacing:1.00px">(</div><div class="a mono" style="left:480.00px;top:275.00px;font-size:10px;line-height:14.25px;color:#1c1c1c">CONDITION</div><div class="a mono" style="left:534.00px;top:275.00px;font-size:10px;line-height:14.25px;color:#e0b0d8;letter-spacing:1.00px">=</div><div class="a mono" style="left:541.00px;top:275.00px;font-size:10px;line-height:14.25px;color:#acacb8">'DUPS'</div><div class="a mono" style="left:577.00px;top:275.00px;font-size:10px;line-height:14.25px;color:#d8d8d0;letter-spacing:1.00px">,</div><div class="a mono" style="left:584.00px;top:275.00px;font-size:10px;line-height:14.25px;color:#1c1c1c">COMMENT</div><div class="a mono" style="left:626.00px;top:275.00px;font-size:10px;line-height:14.25px;color:#e0b0d8;letter-spacing:1.00px">=</div><div class="a mono" style="left:633.00px;top:275.00px;font-size:10px;line-height:14.25px;color:#acacb8">'1:·AUTOCANCEL·RFP·('</div><div class="a mono" style="left:759.00px;top:275.00px;font-size:10px;line-height:14.25px;color:#b0b8a0;letter-spacing:1.00px">·</div><div class="a mono" style="left:766.00px;top:275.00px;font-size:10px;line-height:14.25px;color:#e0b0d8;letter-spacing:1.00px">&amp;</div><div class="a mono" style="left:773.00px;top:275.00px;font-size:10px;line-height:14.25px;color:#b0b8a0;letter-spacing:1.00px">·</div><div class="a mono" style="left:780.00px;top:275.00px;font-size:10px;line-height:14.25px;color:#1c1c1c">RFP</div><div class="a mono" style="left:798.00px;top:275.00px;font-size:10px;line-height:14.25px;color:#d8d8d0;letter-spacing:1.00px">.</div><div class="a mono" style="left:805.00px;top:275.00px;font-size:10px;line-height:14.25px;color:#1a1a9a;font-weight:bold;font-style:italic;text-decoration:underline">ACCESSION</div><div class="a mono" style="left:859.00px;top:275.00px;font-size:10px;line-height:14.25px;color:#b0b8a0;letter-spacing:1.00px">·</div><div class="a mono" style="left:866.00px;top:275.00px;font-size:10px;line-height:14.25px;color:#e0b0d8;letter-spacing:1.00px">&amp;</div><div class="a mono" style="left:873.00px;top:275.00px;font-size:10px;line-height:14.25px;color:#b0b8a0;letter-spacing:1.00px">·</div><div class="a mono" style="left:880.00px;top:275.00px;font-size:10px;line-height:14.25px;color:#acacb8">')</div><div class="a mono" style="left:892.00px;top:275.00px;font-size:10px;line-height:14.25px;color:#b0b8a0;letter-spacing:1.00px">·</div><div class="a mono" style="left:899.00px;top:275.00px;font-size:10px;line-height:14.25px;color:#e2bcd8;letter-spacing:1.00px">(</div><div class="a mono" style="left:906.00px;top:275.00px;font-size:10px;line-height:14.25px;color:#1c1c1c">CMP</div><div class="a mono" style="left:924.00px;top:275.00px;font-size:10px;line-height:14.25px;color:#d8d8d0;letter-spacing:1.00px">.</div><div class="a mono" style="left:931.00px;top:275.00px;font-size:10px;line-height:14.25px;color:#1a1a9a;font-weight:bold;font-style:italic;text-decoration:underline">ACCESSION</div><div class="a mono" style="left:985.00px;top:275.00px;font-size:10px;line-height:14.25px;color:#e2bcd8;letter-spacing:1.00px">)</div><div class="a mono" style="left:318px;top:289.25px;width:28px;text-align:right;font-size:10px;line-height:14.25px;color:#2a2a2a">33</div><div class="a mono" style="left:364.00px;top:289.25px;font-size:10px;line-height:14.25px;color:#e2bcd8;letter-spacing:1.00px">)</div><div class="a mono" style="left:318px;top:303.50px;width:28px;text-align:right;font-size:10px;line-height:14.25px;color:#2a2a2a">34</div><div class="a" style="left:351px;top:307.50px;width:10px;height:4px;background:#505050;border-radius:1px"></div><div class="a" style="left:352px;top:309.00px;width:8px;height:1px;background:#b0b0b0"></div><div class="a mono" style="left:364.00px;top:303.50px;font-size:10px;line-height:14.25px;color:#c81818;font-weight:bold">RULE</div><div class="a mono" style="left:318px;top:317.75px;width:28px;text-align:right;font-size:10px;line-height:14.25px;color:#2a2a2a">35</div><div class="a mono" style="left:364.00px;top:317.75px;font-size:10px;line-height:14.25px;color:#e2bcd8;letter-spacing:1.00px">(</div><div class="a mono" style="left:318px;top:332.00px;width:28px;text-align:right;font-size:10px;line-height:14.25px;color:#2a2a2a">36</div><svg class="a" style="left:364.0px;top:330.00px" width="24.0" height="14"><path d="M2 6.5H22.5M19.0 3.8L22.5 6.5L19.0 9.2" fill="none" stroke="#34342a" stroke-width="1"/></svg><div class="a mono" style="left:388.00px;top:332.00px;font-size:10px;line-height:14.25px;color:#1c1c1c">REFLEXSITE</div><div class="a mono" style="left:448.00px;top:332.00px;font-size:10px;line-height:14.25px;color:#b0b8a0">·</div><div class="a mono" style="left:454.00px;top:332.00px;font-size:10px;line-height:14.25px;color:#e0b0d8;letter-spacing:1.00px">=</div><div class="a mono" style="left:461.00px;top:332.00px;font-size:10px;line-height:14.25px;color:#b0b8a0">·</div><div class="a mono" style="left:467.00px;top:332.00px;font-size:10px;line-height:14.25px;color:#acacb8">'FALSE'</div><div class="a mono" style="left:509.00px;top:332.00px;font-size:10px;line-height:14.25px;color:#b0b8a0">·</div><div class="a mono" style="left:515.00px;top:332.00px;font-size:10px;line-height:14.25px;color:#e040e0;font-weight:bold">AND</div><div class="a mono" style="left:533.00px;top:332.00px;font-size:10px;line-height:14.25px;color:#b0b8a0">·</div><div class="a mono" style="left:318px;top:346.25px;width:28px;text-align:right;font-size:10px;line-height:14.25px;color:#2a2a2a">37</div><svg class="a" style="left:364.0px;top:344.25px" width="24.0" height="14"><path d="M2 6.5H22.5M19.0 3.8L22.5 6.5L19.0 9.2" fill="none" stroke="#34342a" stroke-width="1"/></svg><div class="a mono" style="left:388.00px;top:346.25px;font-size:10px;line-height:14.25px;color:#1c1c1c">RFP</div><div class="a mono" style="left:406.00px;top:346.25px;font-size:10px;line-height:14.25px;color:#d8d8d0;letter-spacing:1.00px">.</div><div class="a mono" style="left:413.00px;top:346.25px;font-size:10px;line-height:14.25px;color:#1a1a9a;font-weight:bold;font-style:italic;text-decoration:underline">FINDTEST</div><div class="a mono" style="left:461.00px;top:346.25px;font-size:10px;line-height:14.25px;color:#b0b8a0">·</div><div class="a mono" style="left:467.00px;top:346.25px;font-size:10px;line-height:14.25px;color:#e040e0;font-weight:bold">AND</div><div class="a mono" style="left:485.00px;top:346.25px;font-size:10px;line-height:14.25px;color:#b0b8a0">·</div><div class="a mono" style="left:318px;top:360.50px;width:28px;text-align:right;font-size:10px;line-height:14.25px;color:#2a2a2a">38</div><svg class="a" style="left:364.0px;top:358.50px" width="24.0" height="14"><path d="M2 6.5H22.5M19.0 3.8L22.5 6.5L19.0 9.2" fill="none" stroke="#34342a" stroke-width="1"/></svg><div class="a mono" style="left:388.00px;top:360.50px;font-size:10px;line-height:14.25px;color:#1c1c1c">CMPOLD</div><div class="a mono" style="left:424.00px;top:360.50px;font-size:10px;line-height:14.25px;color:#d8d8d0;letter-spacing:1.00px">.</div><div class="a mono" style="left:431.00px;top:360.50px;font-size:10px;line-height:14.25px;color:#1a1a9a;font-weight:bold;font-style:italic;text-decoration:underline">FINDTEST</div><div class="a mono" style="left:479.00px;top:360.50px;font-size:10px;line-height:14.25px;color:#b0b8a0">·</div><div class="a mono" style="left:485.00px;top:360.50px;font-size:10px;line-height:14.25px;color:#e040e0;font-weight:bold">AND</div><div class="a mono" style="left:503.00px;top:360.50px;font-size:10px;line-height:14.25px;color:#b0b8a0">·</div><div class="a mono" style="left:318px;top:374.75px;width:28px;text-align:right;font-size:10px;line-height:14.25px;color:#2a2a2a">39</div><svg class="a" style="left:364.0px;top:372.75px" width="24.0" height="14"><path d="M2 6.5H22.5M19.0 3.8L22.5 6.5L19.0 9.2" fill="none" stroke="#34342a" stroke-width="1"/></svg><div class="a" style="left:388.00px;top:372.75px;width:18.00px;height:14.25px;background:#6af0f0"></div><div class="a mono" style="left:388.00px;top:374.75px;font-size:10px;line-height:14.25px;color:#08a040;font-weight:bold">ABS</div><div class="a mono" style="left:406.00px;top:374.75px;font-size:10px;line-height:14.25px;color:#e2bcd8;letter-spacing:1.00px">(</div><div class="a" style="left:413.00px;top:372.75px;width:36.00px;height:14.25px;background:#6af0f0"></div><div class="a mono" style="left:413.00px;top:374.75px;font-size:10px;line-height:14.25px;color:#08a040;font-weight:bold">NUMBER</div><div class="a mono" style="left:449.00px;top:374.75px;font-size:10px;line-height:14.25px;color:#e2bcd8;letter-spacing:1.00px">(</div><div class="a mono" style="left:456.00px;top:374.75px;font-size:10px;line-height:14.25px;color:#1c1c1c">RFP</div><div class="a mono" style="left:474.00px;top:374.75px;font-size:10px;line-height:14.25px;color:#d8d8d0;letter-spacing:1.00px">.</div><div class="a mono" style="left:481.00px;top:374.75px;font-size:10px;line-height:14.25px;color:#1a1a9a;font-weight:bold;font-style:italic;text-decoration:underline">EXPECTED</div><div class="a mono" style="left:529.00px;top:374.75px;font-size:10px;line-height:14.25px;color:#b0b8a0">·</div><div class="a mono" style="left:535.00px;top:374.75px;font-size:10px;line-height:14.25px;color:#e0b0d8;letter-spacing:1.00px">-</div><div class="a mono" style="left:542.00px;top:374.75px;font-size:10px;line-height:14.25px;color:#b0b8a0">·</div><div class="a mono" style="left:548.00px;top:374.75px;font-size:10px;line-height:14.25px;color:#1c1c1c">CMPOLD</div><div class="a mono" style="left:584.00px;top:374.75px;font-size:10px;line-height:14.25px;color:#d8d8d0;letter-spacing:1.00px">.</div><div class="a mono" style="left:591.00px;top:374.75px;font-size:10px;line-height:14.25px;color:#1a1a9a;font-weight:bold;font-style:italic;text-decoration:underline">EXPECTED</div><div class="a mono" style="left:639.00px;top:374.75px;font-size:10px;line-height:14.25px;color:#e2bcd8;letter-spacing:1.00px">)</div><div class="a mono" style="left:646.00px;top:374.75px;font-size:10px;line-height:14.25px;color:#e2bcd8;letter-spacing:1.00px">)</div><div class="a mono" style="left:656.50px;top:374.75px;font-size:10px;line-height:14.25px;color:#b0b8a0">·</div><div class="a mono" style="left:662.50px;top:374.75px;font-size:10px;line-height:14.25px;color:#e0b0d8;letter-spacing:1.00px">&lt;</div><div class="a mono" style="left:669.50px;top:374.75px;font-size:10px;line-height:14.25px;color:#e0b0d8;letter-spacing:1.00px">=</div><div class="a mono" style="left:676.50px;top:374.75px;font-size:10px;line-height:14.25px;color:#1c1c1c">TIMELIMIT</div><div class="a mono" style="left:730.50px;top:374.75px;font-size:10px;line-height:14.25px;color:#b0b8a0">·</div><div class="a mono" style="left:736.50px;top:374.75px;font-size:10px;line-height:14.25px;color:#e040e0;font-weight:bold">AND</div><div class="a mono" style="left:754.50px;top:374.75px;font-size:10px;line-height:14.25px;color:#b0b8a0">·</div><div class="a mono" style="left:318px;top:389.00px;width:28px;text-align:right;font-size:10px;line-height:14.25px;color:#2a2a2a">40</div><svg class="a" style="left:364.0px;top:387.00px" width="24.0" height="14"><path d="M2 6.5H22.5M19.0 3.8L22.5 6.5L19.0 9.2" fill="none" stroke="#34342a" stroke-width="1"/></svg><div class="a" style="left:388.00px;top:387.00px;width:18.00px;height:14.25px;background:#f07cf0"></div><div class="a mono" style="left:388.00px;top:389.00px;font-size:10px;line-height:14.25px;color:#1c1cb8;font-weight:bold">NOT</div><div class="a mono" style="left:406.00px;top:389.00px;font-size:10px;line-height:14.25px;color:#b0b8a0">·</div><div class="a" style="left:412.00px;top:387.00px;width:30.00px;height:14.25px;background:#6af0f0"></div><div class="a mono" style="left:412.00px;top:389.00px;font-size:10px;line-height:14.25px;color:#08a040;font-weight:bold">MATCH</div><div class="a mono" style="left:442.00px;top:389.00px;font-size:10px;line-height:14.25px;color:#e2bcd8;letter-spacing:1.00px">(</div><div class="a mono" style="left:449.00px;top:389.00px;font-size:10px;line-height:14.25px;color:#1c1c1c">CMPOLD</div><div class="a mono" style="left:485.00px;top:389.00px;font-size:10px;line-height:14.25px;color:#d8d8d0;letter-spacing:1.00px">.</div><div class="a mono" style="left:492.00px;top:389.00px;font-size:10px;line-height:14.25px;color:#1a1a9a;font-weight:bold;font-style:italic;text-decoration:underline">STATUS</div><div class="a mono" style="left:528.00px;top:389.00px;font-size:10px;line-height:14.25px;color:#d8d8d0;letter-spacing:1.00px">,</div><div class="a mono" style="left:535.00px;top:389.00px;font-size:10px;line-height:14.25px;color:#acacb8">"V"</div><div class="a mono" style="left:553.00px;top:389.00px;font-size:10px;line-height:14.25px;color:#d8d8d0;letter-spacing:1.00px">,</div><div class="a mono" style="left:560.00px;top:389.00px;font-size:10px;line-height:14.25px;color:#acacb8">"D"</div><div class="a mono" style="left:578.00px;top:389.00px;font-size:10px;line-height:14.25px;color:#d8d8d0;letter-spacing:1.00px">,</div><div class="a mono" style="left:585.00px;top:389.00px;font-size:10px;line-height:14.25px;color:#acacb8">"X"</div><div class="a mono" style="left:603.00px;top:389.00px;font-size:10px;line-height:14.25px;color:#e2bcd8;letter-spacing:1.00px">)</div><div class="a mono" style="left:610.00px;top:389.00px;font-size:10px;line-height:14.25px;color:#b0b8a0">·</div><div class="a mono" style="left:616.00px;top:389.00px;font-size:10px;line-height:14.25px;color:#e040e0;font-weight:bold">AND</div><div class="a mono" style="left:634.00px;top:389.00px;font-size:10px;line-height:14.25px;color:#b0b8a0">·</div><div class="a mono" style="left:318px;top:403.25px;width:28px;text-align:right;font-size:10px;line-height:14.25px;color:#2a2a2a">41</div><svg class="a" style="left:364.0px;top:401.25px" width="24.0" height="14"><path d="M2 6.5H22.5M19.0 3.8L22.5 6.5L19.0 9.2" fill="none" stroke="#34342a" stroke-width="1"/></svg><div class="a" style="left:388.00px;top:401.25px;width:18.00px;height:14.25px;background:#f07cf0"></div><div class="a mono" style="left:388.00px;top:403.25px;font-size:10px;line-height:14.25px;color:#1c1cb8;font-weight:bold">NOT</div><div class="a mono" style="left:406.00px;top:403.25px;font-size:10px;line-height:14.25px;color:#b0b8a0">·</div><div class="a" style="left:412.00px;top:401.25px;width:30.00px;height:14.25px;background:#6af0f0"></div><div class="a mono" style="left:412.00px;top:403.25px;font-size:10px;line-height:14.25px;color:#08a040;font-weight:bold">MATCH</div><div class="a mono" style="left:442.00px;top:403.25px;font-size:10px;line-height:14.25px;color:#e2bcd8;letter-spacing:1.00px">(</div><div class="a mono" style="left:449.00px;top:403.25px;font-size:10px;line-height:14.25px;color:#1c1c1c">RFP</div><div class="a mono" style="left:467.00px;top:403.25px;font-size:10px;line-height:14.25px;color:#d8d8d0;letter-spacing:1.00px">.</div><div class="a mono" style="left:474.00px;top:403.25px;font-size:10px;line-height:14.25px;color:#1a1a9a;font-weight:bold;font-style:italic;text-decoration:underline">STATUS</div><div class="a mono" style="left:510.00px;top:403.25px;font-size:10px;line-height:14.25px;color:#d8d8d0;letter-spacing:1.00px">,</div><div class="a mono" style="left:517.00px;top:403.25px;font-size:10px;line-height:14.25px;color:#acacb8">"L"</div><div class="a mono" style="left:535.00px;top:403.25px;font-size:10px;line-height:14.25px;color:#d8d8d0;letter-spacing:1.00px">,</div><div class="a mono" style="left:542.00px;top:403.25px;font-size:10px;line-height:14.25px;color:#acacb8">"A"</div><div class="a mono" style="left:560.00px;top:403.25px;font-size:10px;line-height:14.25px;color:#d8d8d0;letter-spacing:1.00px">,</div><div class="a mono" style="left:567.00px;top:403.25px;font-size:10px;line-height:14.25px;color:#acacb8">"T"</div><div class="a mono" style="left:585.00px;top:403.25px;font-size:10px;line-height:14.25px;color:#d8d8d0;letter-spacing:1.00px">,</div><div class="a mono" style="left:592.00px;top:403.25px;font-size:10px;line-height:14.25px;color:#acacb8">"G"</div><div class="a mono" style="left:610.00px;top:403.25px;font-size:10px;line-height:14.25px;color:#d8d8d0;letter-spacing:1.00px">,</div><div class="a mono" style="left:617.00px;top:403.25px;font-size:10px;line-height:14.25px;color:#acacb8">"I"</div><div class="a mono" style="left:635.00px;top:403.25px;font-size:10px;line-height:14.25px;color:#d8d8d0;letter-spacing:1.00px">,</div><div class="a mono" style="left:642.00px;top:403.25px;font-size:10px;line-height:14.25px;color:#acacb8">"V"</div><div class="a mono" style="left:660.00px;top:403.25px;font-size:10px;line-height:14.25px;color:#d8d8d0;letter-spacing:1.00px">,</div><div class="a mono" style="left:667.00px;top:403.25px;font-size:10px;line-height:14.25px;color:#acacb8">"D"</div><div class="a mono" style="left:685.00px;top:403.25px;font-size:10px;line-height:14.25px;color:#d8d8d0;letter-spacing:1.00px">,</div><div class="a mono" style="left:692.00px;top:403.25px;font-size:10px;line-height:14.25px;color:#acacb8">"X"</div><div class="a mono" style="left:710.00px;top:403.25px;font-size:10px;line-height:14.25px;color:#e2bcd8;letter-spacing:1.00px">)</div><div class="a mono" style="left:717.00px;top:403.25px;font-size:10px;line-height:14.25px;color:#b0b8a0">·</div><div class="a mono" style="left:723.00px;top:403.25px;font-size:10px;line-height:14.25px;color:#e040e0;font-weight:bold">AND</div><div class="a mono" style="left:741.00px;top:403.25px;font-size:10px;line-height:14.25px;color:#b0b8a0">·</div><div class="a mono" style="left:318px;top:417.50px;width:28px;text-align:right;font-size:10px;line-height:14.25px;color:#2a2a2a">42</div><svg class="a" style="left:364.0px;top:415.50px" width="24.0" height="14"><path d="M2 6.5H22.5M19.0 3.8L22.5 6.5L19.0 9.2" fill="none" stroke="#34342a" stroke-width="1"/></svg><div class="a mono" style="left:388.00px;top:417.50px;font-size:10px;line-height:14.25px;color:#e2bcd8;letter-spacing:1.00px">(</div><div class="a mono" style="left:318px;top:431.75px;width:28px;text-align:right;font-size:10px;line-height:14.25px;color:#2a2a2a">43</div><svg class="a" style="left:364.0px;top:429.75px" width="24.0" height="14"><path d="M2 6.5H22.5M19.0 3.8L22.5 6.5L19.0 9.2" fill="none" stroke="#34342a" stroke-width="1"/></svg><div class="a" style="left:388.0px;top:429.75px;width:1px;height:14.25px;background:repeating-linear-gradient(#707070 0 1px,transparent 1px 2px)"></div><svg class="a" style="left:388.0px;top:429.75px" width="24.0" height="14"><path d="M2 6.5H22.5M19.0 3.8L22.5 6.5L19.0 9.2" fill="none" stroke="#34342a" stroke-width="1"/></svg><div class="a mono" style="left:412.00px;top:431.75px;font-size:10px;line-height:14.25px;color:#e2bcd8;letter-spacing:1.00px">(</div><div class="a" style="left:419.00px;top:429.75px;width:18.00px;height:14.25px;background:#f07cf0"></div><div class="a mono" style="left:419.00px;top:431.75px;font-size:10px;line-height:14.25px;color:#1c1cb8;font-weight:bold">NOT</div><div class="a mono" style="left:437.00px;top:431.75px;font-size:10px;line-height:14.25px;color:#b0b8a0">·</div><div class="a" style="left:443.00px;top:429.75px;width:30.00px;height:14.25px;background:#6af0f0"></div><div class="a mono" style="left:443.00px;top:431.75px;font-size:10px;line-height:14.25px;color:#08a040;font-weight:bold">MATCH</div><div class="a mono" style="left:473.00px;top:431.75px;font-size:10px;line-height:14.25px;color:#e2bcd8;letter-spacing:1.00px">(</div><div class="a mono" style="left:480.00px;top:431.75px;font-size:10px;line-height:14.25px;color:#1c1c1c">RFP</div><div class="a mono" style="left:498.00px;top:431.75px;font-size:10px;line-height:14.25px;color:#d8d8d0;letter-spacing:1.00px">.</div><div class="a mono" style="left:505.00px;top:431.75px;font-size:10px;line-height:14.25px;color:#1a1a9a;font-weight:bold;font-style:italic;text-decoration:underline">PLCODE</div><div class="a mono" style="left:541.00px;top:431.75px;font-size:10px;line-height:14.25px;color:#d8d8d0;letter-spacing:1.00px">,</div><div class="a mono" style="left:548.00px;top:431.75px;font-size:10px;line-height:14.25px;color:#acacb8">"S"</div><div class="a mono" style="left:566.00px;top:431.75px;font-size:10px;line-height:14.25px;color:#e2bcd8;letter-spacing:1.00px">)</div><div class="a mono" style="left:573.00px;top:431.75px;font-size:10px;line-height:14.25px;color:#e2bcd8;letter-spacing:1.00px">)</div><div class="a mono" style="left:580.00px;top:431.75px;font-size:10px;line-height:14.25px;color:#b0b8a0">·</div><div class="a mono" style="left:586.00px;top:431.75px;font-size:10px;line-height:14.25px;color:#e040e0;font-weight:bold">OR</div><div class="a mono" style="left:598.00px;top:431.75px;font-size:10px;line-height:14.25px;color:#b0b8a0">·</div><div class="a mono" style="left:318px;top:446.00px;width:28px;text-align:right;font-size:10px;line-height:14.25px;color:#2a2a2a">44</div><svg class="a" style="left:364.0px;top:444.00px" width="24.0" height="14"><path d="M2 6.5H22.5M19.0 3.8L22.5 6.5L19.0 9.2" fill="none" stroke="#34342a" stroke-width="1"/></svg><div class="a" style="left:388.0px;top:444.00px;width:1px;height:14.25px;background:repeating-linear-gradient(#707070 0 1px,transparent 1px 2px)"></div><svg class="a" style="left:388.0px;top:444.00px" width="24.0" height="14"><path d="M2 6.5H22.5M19.0 3.8L22.5 6.5L19.0 9.2" fill="none" stroke="#34342a" stroke-width="1"/></svg><div class="a mono" style="left:412.00px;top:446.00px;font-size:10px;line-height:14.25px;color:#e2bcd8;letter-spacing:1.00px">(</div><div class="a" style="left:419.00px;top:444.00px;width:30.00px;height:14.25px;background:#6af0f0"></div><div class="a mono" style="left:419.00px;top:446.00px;font-size:10px;line-height:14.25px;color:#08a040;font-weight:bold">MATCH</div><div class="a mono" style="left:449.00px;top:446.00px;font-size:10px;line-height:14.25px;color:#e2bcd8;letter-spacing:1.00px">(</div><div class="a mono" style="left:456.00px;top:446.00px;font-size:10px;line-height:14.25px;color:#1c1c1c">RFP</div><div class="a mono" style="left:474.00px;top:446.00px;font-size:10px;line-height:14.25px;color:#d8d8d0;letter-spacing:1.00px">.</div><div class="a mono" style="left:481.00px;top:446.00px;font-size:10px;line-height:14.25px;color:#1a1a9a;font-weight:bold;font-style:italic;text-decoration:underline">PLCODE</div><div class="a mono" style="left:517.00px;top:446.00px;font-size:10px;line-height:14.25px;color:#d8d8d0;letter-spacing:1.00px">,</div><div class="a mono" style="left:524.00px;top:446.00px;font-size:10px;line-height:14.25px;color:#acacb8">"S"</div><div class="a mono" style="left:542.00px;top:446.00px;font-size:10px;line-height:14.25px;color:#e2bcd8;letter-spacing:1.00px">)</div><div class="a mono" style="left:549.00px;top:446.00px;font-size:10px;line-height:14.25px;color:#b0b8a0">·</div><div class="a mono" style="left:555.00px;top:446.00px;font-size:10px;line-height:14.25px;color:#e040e0;font-weight:bold">AND</div><div class="a mono" style="left:573.00px;top:446.00px;font-size:10px;line-height:14.25px;color:#b0b8a0">·</div><div class="a" style="left:579.00px;top:444.00px;width:30.00px;height:14.25px;background:#6af0f0"></div><div class="a mono" style="left:579.00px;top:446.00px;font-size:10px;line-height:14.25px;color:#08a040;font-weight:bold">MATCH</div><div class="a mono" style="left:609.00px;top:446.00px;font-size:10px;line-height:14.25px;color:#e2bcd8;letter-spacing:1.00px">(</div><div class="a mono" style="left:616.00px;top:446.00px;font-size:10px;line-height:14.25px;color:#1c1c1c">CMPOLD</div><div class="a mono" style="left:652.00px;top:446.00px;font-size:10px;line-height:14.25px;color:#d8d8d0;letter-spacing:1.00px">.</div><div class="a mono" style="left:659.00px;top:446.00px;font-size:10px;line-height:14.25px;color:#1a1a9a;font-weight:bold;font-style:italic;text-decoration:underline">PLCODE</div><div class="a mono" style="left:695.00px;top:446.00px;font-size:10px;line-height:14.25px;color:#d8d8d0;letter-spacing:1.00px">,</div><div class="a mono" style="left:702.00px;top:446.00px;font-size:10px;line-height:14.25px;color:#acacb8">"S"</div><div class="a mono" style="left:720.00px;top:446.00px;font-size:10px;line-height:14.25px;color:#e2bcd8;letter-spacing:1.00px">)</div><div class="a mono" style="left:727.00px;top:446.00px;font-size:10px;line-height:14.25px;color:#e2bcd8;letter-spacing:1.00px">)</div><div class="a mono" style="left:318px;top:460.25px;width:28px;text-align:right;font-size:10px;line-height:14.25px;color:#2a2a2a">45</div><svg class="a" style="left:364.0px;top:458.25px" width="24.0" height="14"><path d="M2 6.5H22.5M19.0 3.8L22.5 6.5L19.0 9.2" fill="none" stroke="#34342a" stroke-width="1"/></svg><div class="a mono" style="left:388.00px;top:460.25px;font-size:10px;line-height:14.25px;color:#e2bcd8;letter-spacing:1.00px">)</div><div class="a mono" style="left:318px;top:474.50px;width:28px;text-align:right;font-size:10px;line-height:14.25px;color:#2a2a2a">46</div><div class="a mono" style="left:364.00px;top:474.50px;font-size:10px;line-height:14.25px;color:#e2bcd8;letter-spacing:1.00px">)</div><div class="a mono" style="left:318px;top:488.75px;width:28px;text-align:right;font-size:10px;line-height:14.25px;color:#2a2a2a">47</div><div class="a mono" style="left:364.00px;top:488.75px;font-size:10px;line-height:14.25px;color:#e2bcd8;letter-spacing:1.00px">(</div><div class="a mono" style="left:318px;top:503.00px;width:28px;text-align:right;font-size:10px;line-height:14.25px;color:#2a2a2a">48</div><svg class="a" style="left:364.0px;top:501.00px" width="24.0" height="14"><path d="M2 6.5H22.5M19.0 3.8L22.5 6.5L19.0 9.2" fill="none" stroke="#34342a" stroke-width="1"/></svg><div class="a mono" style="left:388.00px;top:503.00px;font-size:10px;line-height:14.25px;color:#1c1c1c">RFP</div><div class="a mono" style="left:406.00px;top:503.00px;font-size:10px;line-height:14.25px;color:#d8d8d0;letter-spacing:1.00px">.</div><div class="a mono" style="left:413.00px;top:503.00px;font-size:10px;line-height:14.25px;color:#1a1a9a;font-weight:bold;font-style:italic;text-decoration:underline">CANCELTEST</div><div class="a mono" style="left:473.00px;top:503.00px;font-size:10px;line-height:14.25px;color:#e2bcd8;letter-spacing:1.00px">(</div><div class="a mono" style="left:480.00px;top:503.00px;font-size:10px;line-height:14.25px;color:#1c1c1c">CONDITION</div><div class="a mono" style="left:534.00px;top:503.00px;font-size:10px;line-height:14.25px;color:#e0b0d8;letter-spacing:1.00px">=</div><div class="a mono" style="left:541.00px;top:503.00px;font-size:10px;line-height:14.25px;color:#acacb8">'DUPS'</div><div class="a mono" style="left:577.00px;top:503.00px;font-size:10px;line-height:14.25px;color:#d8d8d0;letter-spacing:1.00px">,</div><div class="a mono" style="left:584.00px;top:503.00px;font-size:10px;line-height:14.25px;color:#1c1c1c">COMMENT</div><div class="a mono" style="left:626.00px;top:503.00px;font-size:10px;line-height:14.25px;color:#e0b0d8;letter-spacing:1.00px">=</div><div class="a mono" style="left:633.00px;top:503.00px;font-size:10px;line-height:14.25px;color:#acacb8">'2:·AUTOCANCEL·RFP·('</div><div class="a mono" style="left:759.00px;top:503.00px;font-size:10px;line-height:14.25px;color:#b0b8a0;letter-spacing:1.00px">·</div><div class="a mono" style="left:766.00px;top:503.00px;font-size:10px;line-height:14.25px;color:#e0b0d8;letter-spacing:1.00px">&amp;</div><div class="a mono" style="left:773.00px;top:503.00px;font-size:10px;line-height:14.25px;color:#b0b8a0;letter-spacing:1.00px">·</div><div class="a mono" style="left:780.00px;top:503.00px;font-size:10px;line-height:14.25px;color:#1c1c1c">RFP</div><div class="a mono" style="left:798.00px;top:503.00px;font-size:10px;line-height:14.25px;color:#d8d8d0;letter-spacing:1.00px">.</div><div class="a mono" style="left:805.00px;top:503.00px;font-size:10px;line-height:14.25px;color:#1a1a9a;font-weight:bold;font-style:italic;text-decoration:underline">ACCESSION</div><div class="a mono" style="left:859.00px;top:503.00px;font-size:10px;line-height:14.25px;color:#b0b8a0;letter-spacing:1.00px">·</div><div class="a mono" style="left:866.00px;top:503.00px;font-size:10px;line-height:14.25px;color:#e0b0d8;letter-spacing:1.00px">&amp;</div><div class="a mono" style="left:873.00px;top:503.00px;font-size:10px;line-height:14.25px;color:#b0b8a0;letter-spacing:1.00px">·</div><div class="a mono" style="left:880.00px;top:503.00px;font-size:10px;line-height:14.25px;color:#acacb8">')</div><div class="a mono" style="left:892.00px;top:503.00px;font-size:10px;line-height:14.25px;color:#b0b8a0;letter-spacing:1.00px">·</div><div class="a mono" style="left:899.00px;top:503.00px;font-size:10px;line-height:14.25px;color:#e2bcd8;letter-spacing:1.00px">(</div><div class="a mono" style="left:906.00px;top:503.00px;font-size:10px;line-height:14.25px;color:#1c1c1c">CMP</div><div class="a mono" style="left:924.00px;top:503.00px;font-size:10px;line-height:14.25px;color:#d8d8d0;letter-spacing:1.00px">.</div><div class="a mono" style="left:931.00px;top:503.00px;font-size:10px;line-height:14.25px;color:#1a1a9a;font-weight:bold;font-style:italic;text-decoration:underline">ACCESSION</div><div class="a mono" style="left:985.00px;top:503.00px;font-size:10px;line-height:14.25px;color:#e2bcd8;letter-spacing:1.00px">)</div><div class="a mono" style="left:318px;top:517.25px;width:28px;text-align:right;font-size:10px;line-height:14.25px;color:#2a2a2a">49</div><div class="a mono" style="left:364.00px;top:517.25px;font-size:10px;line-height:14.25px;color:#e2bcd8;letter-spacing:1.00px">)</div><div class="a mono" style="left:318px;top:531.50px;width:28px;text-align:right;font-size:10px;line-height:14.25px;color:#2a2a2a">50</div><div class="a mono" style="left:364.00px;top:531.50px;font-size:10px;line-height:14.25px;color:#3a9a56">//·REFLEX*****************************************·</div><div class="a mono" style="left:318px;top:545.75px;width:28px;text-align:right;font-size:10px;line-height:14.25px;color:#2a2a2a">51</div><div class="a" style="left:351px;top:549.75px;width:10px;height:4px;background:#505050;border-radius:1px"></div><div class="a" style="left:352px;top:551.25px;width:8px;height:1px;background:#b0b0b0"></div><div class="a mono" style="left:364.00px;top:545.75px;font-size:10px;line-height:14.25px;color:#c81818;font-weight:bold">RULE</div></div></body></html>
